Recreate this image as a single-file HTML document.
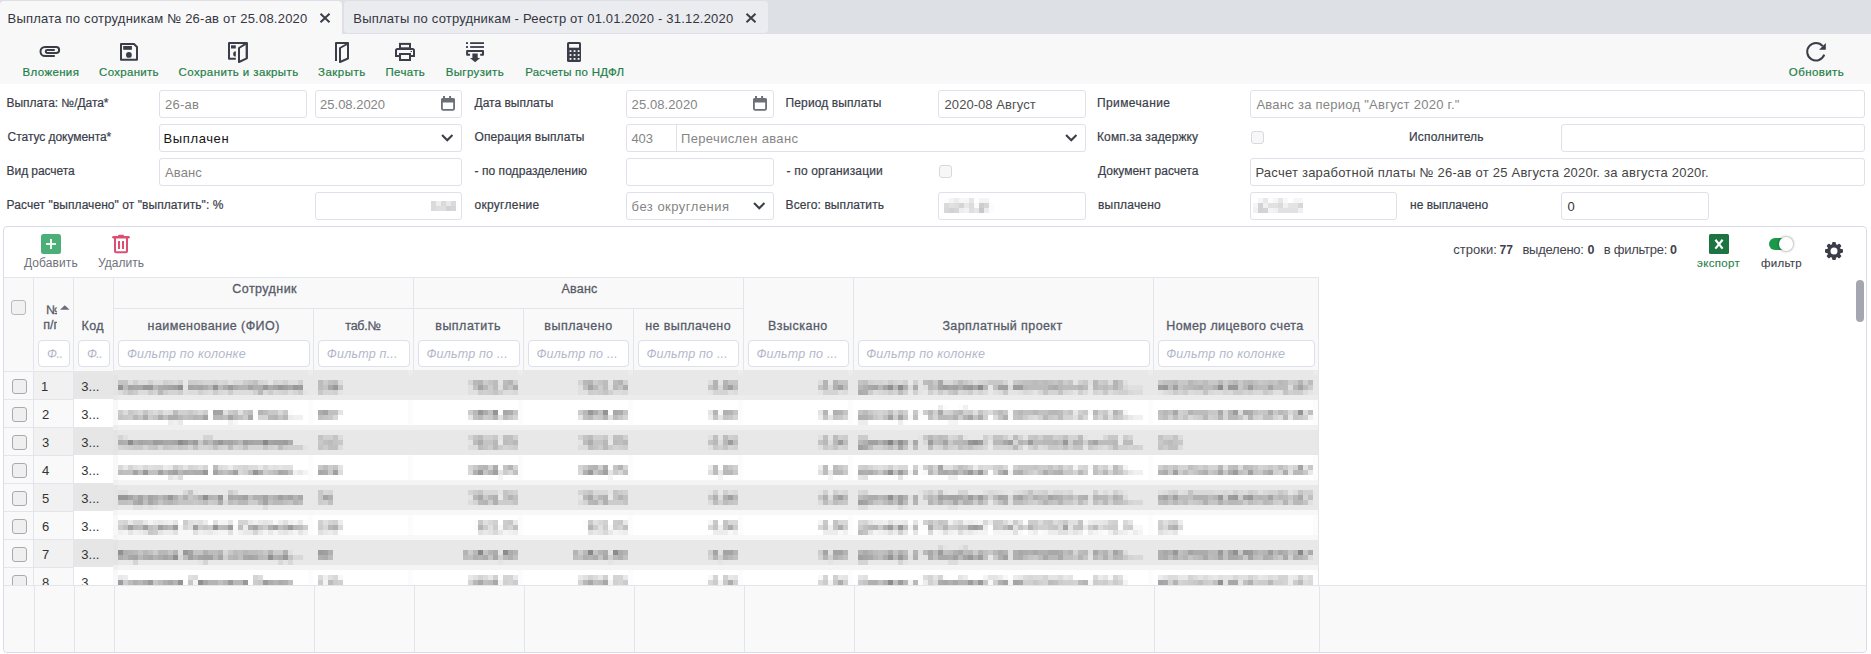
<!DOCTYPE html><html><head><meta charset="utf-8"><style>*{margin:0;padding:0;box-sizing:content-box}html,body{width:1871px;height:654px;overflow:hidden;background:#fff;position:relative;font-family:'Liberation Sans',sans-serif}
.t{position:absolute;white-space:nowrap;line-height:1;font-family:'Liberation Sans',sans-serif}</style></head><body>
<div style="position:absolute;left:0px;top:0px;width:1871px;height:34px;background:#dde0e5"></div>
<div style="position:absolute;left:0px;top:1px;width:342px;height:33px;background:#f8f8f9;border-radius:4px 4px 0 0"></div>
<div style="position:absolute;left:344px;top:1px;width:424px;height:32px;background:#ebecf0;border-radius:4px"></div>
<svg style="position:absolute;left:319px;top:12px" width="12" height="12" viewBox="319 12 12 12"><path d="M320.5 13.8 L329.5 22.2 M329.5 13.8 L320.5 22.2" stroke="#3b3e48" stroke-width="2" fill="none"/></svg>
<svg style="position:absolute;left:745px;top:12px" width="12" height="12" viewBox="745 12 12 12"><path d="M746.5 13.8 L755.5 22.2 M755.5 13.8 L746.5 22.2" stroke="#3b3e48" stroke-width="2" fill="none"/></svg>
<div style="position:absolute;left:0px;top:34px;width:1871px;height:50px;background:#f8f8f9"></div>
<svg style="position:absolute;left:36px;top:42px" width="28" height="18" viewBox="36 42 28 18"><path d="M54.8 50 H47.2 A1.45 1.45 0 0 0 47.2 52.9 H56.2 A2.95 2.95 0 0 0 56.2 47 H45 A4.5 4.5 0 0 0 45 56 H54.8" fill="none" stroke="#3b3e48" stroke-width="2"/></svg>
<svg style="position:absolute;left:116px;top:40px" width="26" height="24" viewBox="116 40 26 24"><path d="M121 44 H134 L137 47 V59.8 H121 Z" fill="none" stroke="#3b3e48" stroke-width="2" stroke-linejoin="round"/><rect x="123.2" y="46" width="8.7" height="3.8" fill="#3b3e48"/><circle cx="128.9" cy="54.9" r="2.9" fill="#3b3e48"/></svg>
<svg style="position:absolute;left:224px;top:38px" width="30" height="28" viewBox="224 38 30 28"><path d="M235.8 58.7 H229 V43 H246.8 V58.5" fill="none" stroke="#3b3e48" stroke-width="2" stroke-linejoin="round"/><path d="M239 48 L246.8 43.2 V58.3 L239 62 Z" fill="none" stroke="#3b3e48" stroke-width="2" stroke-linejoin="round"/><rect x="231" y="45.3" width="4.8" height="3.2" fill="#3b3e48"/><path d="M235.8 51.3 A2.65 2.65 0 0 0 235.8 56.6 Z" fill="#3b3e48"/></svg>
<svg style="position:absolute;left:328px;top:38px" width="28" height="28" viewBox="328 38 28 28"><path d="M336 60.9 V43 H348 V58.5" fill="none" stroke="#3b3e48" stroke-width="2" stroke-linejoin="round"/><path d="M340 48 L348 43.5 V58.5 L340 62 Z" fill="none" stroke="#3b3e48" stroke-width="2" stroke-linejoin="round"/></svg>
<svg style="position:absolute;left:390px;top:38px" width="30" height="28" viewBox="390 38 30 28"><rect x="400" y="43.9" width="10" height="4.4" fill="none" stroke="#3b3e48" stroke-width="2"/><path d="M399.5 55.9 H396 V50.5 A1.5 1.5 0 0 1 397.5 49 H412.5 A1.5 1.5 0 0 1 414 50.5 V55.9 H410.5" fill="none" stroke="#3b3e48" stroke-width="2"/><rect x="400" y="54" width="10" height="6" fill="none" stroke="#3b3e48" stroke-width="2"/><rect x="410.6" y="51" width="1.4" height="1" fill="#3b3e48"/></svg>
<svg style="position:absolute;left:462px;top:38px" width="26" height="28" viewBox="462 38 26 28"><rect x="466" y="42.2" width="2" height="1.8" fill="#3b3e48"/><rect x="466" y="46.1" width="2" height="1.8" fill="#3b3e48"/><rect x="470.1" y="42.2" width="13.9" height="1.8" fill="#3b3e48"/><rect x="470.1" y="46.1" width="13.9" height="1.8" fill="#3b3e48"/><path d="M470 54.8 H467.1 V51.1 H483 V54.8 H480.2" fill="none" stroke="#3b3e48" stroke-width="2" stroke-width="1.9" stroke-linejoin="round"/><rect x="472.4" y="53.5" width="5.3" height="5" fill="#3b3e48"/><path d="M470 58 H480.2 L475.1 62.2 Z" fill="#3b3e48"/></svg>
<svg style="position:absolute;left:564px;top:38px" width="20" height="28" viewBox="564 38 20 28"><rect x="567" y="42" width="14" height="20" rx="1.6" fill="#3b3e48"/><rect x="569.1" y="44" width="9.9" height="3.7" fill="#f8f8f9"/><rect x="569.60" y="50.20" width="1.8" height="1.8" fill="#f8f8f9"/><rect x="569.60" y="54.10" width="1.8" height="1.8" fill="#f8f8f9"/><rect x="569.60" y="58.00" width="1.8" height="1.8" fill="#f8f8f9"/><rect x="573.65" y="50.20" width="1.8" height="1.8" fill="#f8f8f9"/><rect x="573.65" y="54.10" width="1.8" height="1.8" fill="#f8f8f9"/><rect x="573.65" y="58.00" width="1.8" height="1.8" fill="#f8f8f9"/><rect x="577.70" y="50.20" width="1.8" height="1.8" fill="#f8f8f9"/><rect x="577.70" y="54.10" width="1.8" height="1.8" fill="#f8f8f9"/><rect x="577.70" y="58.00" width="1.8" height="1.8" fill="#f8f8f9"/></svg>
<svg style="position:absolute;left:1802px;top:38px" width="28" height="28" viewBox="1802 38 28 28"><path d="M1824.27 54.71 A8.8 8.8 0 1 1 1822.74 46.04" fill="none" stroke="#3b3e48" stroke-width="2" stroke-width="1.9"/><path d="M1825.8 43.1 V49.8 H1819.1 Z" fill="#3b3e48"/></svg>
<div style="position:absolute;left:159px;top:90px;width:146px;height:26px;border:1px solid #dfe0e9;border-radius:3px;background:#fff"></div>
<div style="position:absolute;left:315px;top:90px;width:145px;height:26px;border:1px solid #dfe0e9;border-radius:3px;background:#fff"></div>
<svg style="position:absolute;left:440px;top:96px" width="16" height="16" viewBox="440 96 16 16"><rect x="441.9" y="99" width="12.2" height="10.8" rx="1.3" fill="none" stroke="#6b6f7a" stroke-width="1.8"/><rect x="441" y="98.5" width="14" height="4" fill="#6b6f7a" rx="1"/><rect x="443" y="96" width="2" height="3" fill="#6b6f7a"/><rect x="449.1" y="96" width="2" height="3" fill="#6b6f7a"/></svg>
<div style="position:absolute;left:159px;top:124px;width:301px;height:26px;border:1px solid #dfe0e9;border-radius:3px;background:#fff"></div>
<svg style="position:absolute;left:441px;top:133px" width="13" height="11" viewBox="441 133 13 11"><path d="M442.8 135.8 L447.25 140.2 L451.7 135.8" fill="none" stroke="#3b3e48" stroke-width="2.1" stroke-linecap="square"/></svg>
<div style="position:absolute;left:159px;top:158px;width:301px;height:26px;border:1px solid #dfe0e9;border-radius:3px;background:#fff"></div>
<div style="position:absolute;left:315px;top:192px;width:145px;height:26px;border:1px solid #dfe0e9;border-radius:3px;background:#fff"></div>
<div style="position:absolute;left:626px;top:90px;width:146px;height:26px;border:1px solid #dfe0e9;border-radius:3px;background:#fff"></div>
<svg style="position:absolute;left:752px;top:96px" width="16" height="16" viewBox="752 96 16 16"><rect x="753.9" y="99" width="12.2" height="10.8" rx="1.3" fill="none" stroke="#6b6f7a" stroke-width="1.8"/><rect x="753" y="98.5" width="14" height="4" fill="#6b6f7a" rx="1"/><rect x="755" y="96" width="2" height="3" fill="#6b6f7a"/><rect x="761.1" y="96" width="2" height="3" fill="#6b6f7a"/></svg>
<div style="position:absolute;left:626px;top:124px;width:458px;height:26px;border:1px solid #dfe0e9;border-radius:3px;background:#fff"></div>
<div style="position:absolute;left:676px;top:125px;width:1px;height:26px;background:#dfe0e9"></div>
<svg style="position:absolute;left:1065px;top:133px" width="13" height="11" viewBox="1065 133 13 11"><path d="M1066.8 135.8 L1071.25 140.2 L1075.7 135.8" fill="none" stroke="#3b3e48" stroke-width="2.1" stroke-linecap="square"/></svg>
<div style="position:absolute;left:626px;top:158px;width:146px;height:26px;border:1px solid #dfe0e9;border-radius:3px;background:#fff"></div>
<div style="position:absolute;left:626px;top:192px;width:146px;height:26px;border:1px solid #dfe0e9;border-radius:3px;background:#fff"></div>
<svg style="position:absolute;left:753px;top:201px" width="13" height="11" viewBox="753 201 13 11"><path d="M754.8 203.8 L759.25 208.2 L763.7 203.8" fill="none" stroke="#3b3e48" stroke-width="2.1" stroke-linecap="square"/></svg>
<div style="position:absolute;left:938px;top:90px;width:146px;height:26px;border:1px solid #dfe0e9;border-radius:3px;background:#fff"></div>
<div style="position:absolute;left:939px;top:165px;width:11px;height:11px;border:1px solid #d8d9e0;border-radius:3px;background:#f7f7f8"></div>
<div style="position:absolute;left:938px;top:192px;width:146px;height:26px;border:1px solid #dfe0e9;border-radius:3px;background:#fff"></div>
<div style="position:absolute;left:1250px;top:90px;width:613px;height:26px;border:1px solid #dfe0e9;border-radius:3px;background:#fff"></div>
<div style="position:absolute;left:1251px;top:131px;width:11px;height:11px;border:1px solid #d8d9e0;border-radius:3px;background:#f7f7f8"></div>
<div style="position:absolute;left:1561px;top:124px;width:302px;height:26px;border:1px solid #dfe0e9;border-radius:3px;background:#fff"></div>
<div style="position:absolute;left:1250px;top:158px;width:613px;height:26px;border:1px solid #dfe0e9;border-radius:3px;background:#fff"></div>
<div style="position:absolute;left:1250px;top:192px;width:145px;height:26px;border:1px solid #dfe0e9;border-radius:3px;background:#fff"></div>
<div style="position:absolute;left:1561px;top:192px;width:146px;height:26px;border:1px solid #dfe0e9;border-radius:3px;background:#fff"></div>
<svg style="position:absolute;left:431px;top:201px" width="25" height="10" viewBox="431 201 25 10"><rect x="431" y="201" width="5" height="5" fill="#dadada"/><rect x="436" y="201" width="5" height="5" fill="#eeeeee"/><rect x="441" y="201" width="5" height="5" fill="#dadada"/><rect x="446" y="201" width="5" height="5" fill="#e8e8e8"/><rect x="451" y="201" width="5" height="5" fill="#dadada"/><rect x="431" y="206" width="5" height="5" fill="#dadada"/><rect x="436" y="206" width="5" height="5" fill="#dedede"/><rect x="441" y="206" width="5" height="5" fill="#dedede"/><rect x="446" y="206" width="5" height="5" fill="#d2d2d2"/><rect x="451" y="206" width="5" height="5" fill="#d6d6d6"/></svg>
<svg style="position:absolute;left:944px;top:198px" width="50" height="15" viewBox="944 198 50 15"><rect x="944" y="198" width="5" height="5" fill="#fcfcfc"/><rect x="949" y="198" width="5" height="5" fill="#f4f4f4"/><rect x="954" y="198" width="5" height="5" fill="#ececec"/><rect x="959" y="198" width="5" height="5" fill="#f6f6f6"/><rect x="964" y="198" width="5" height="5" fill="#f6f6f6"/><rect x="969" y="198" width="5" height="5" fill="#e6e6e6"/><rect x="979" y="198" width="5" height="5" fill="#f4f4f4"/><rect x="984" y="198" width="5" height="5" fill="#f4f4f4"/><rect x="944" y="203" width="5" height="5" fill="#dadada"/><rect x="949" y="203" width="5" height="5" fill="#e1e1e1"/><rect x="954" y="203" width="5" height="5" fill="#dedede"/><rect x="959" y="203" width="5" height="5" fill="#d4d4d4"/><rect x="964" y="203" width="5" height="5" fill="#e8e8e8"/><rect x="969" y="203" width="5" height="5" fill="#dcdcdc"/><rect x="974" y="203" width="5" height="5" fill="#fafafa"/><rect x="979" y="203" width="5" height="5" fill="#cdcdcd"/><rect x="984" y="203" width="5" height="5" fill="#d6d6d6"/><rect x="989" y="203" width="5" height="5" fill="#fcfcfc"/><rect x="944" y="208" width="5" height="5" fill="#d7d7d7"/><rect x="949" y="208" width="5" height="5" fill="#d2d2d2"/><rect x="954" y="208" width="5" height="5" fill="#d6d6d6"/><rect x="959" y="208" width="5" height="5" fill="#eeeeee"/><rect x="964" y="208" width="5" height="5" fill="#f2f2f2"/><rect x="969" y="208" width="5" height="5" fill="#dedede"/><rect x="974" y="208" width="5" height="5" fill="#e6e6e6"/><rect x="979" y="208" width="5" height="5" fill="#c8c8c8"/><rect x="984" y="208" width="5" height="5" fill="#ececec"/><rect x="989" y="208" width="5" height="5" fill="#fcfcfc"/></svg>
<svg style="position:absolute;left:1253px;top:198px" width="50" height="15" viewBox="1253 198 50 15"><rect x="1258" y="198" width="5" height="5" fill="#f6f6f6"/><rect x="1263" y="198" width="5" height="5" fill="#e8e8e8"/><rect x="1268" y="198" width="5" height="5" fill="#fcfcfc"/><rect x="1273" y="198" width="5" height="5" fill="#f6f6f6"/><rect x="1278" y="198" width="5" height="5" fill="#e6e6e6"/><rect x="1283" y="198" width="5" height="5" fill="#f8f8f8"/><rect x="1293" y="198" width="5" height="5" fill="#f6f6f6"/><rect x="1298" y="198" width="5" height="5" fill="#f6f6f6"/><rect x="1253" y="203" width="5" height="5" fill="#f5f5f5"/><rect x="1258" y="203" width="5" height="5" fill="#d2d2d2"/><rect x="1263" y="203" width="5" height="5" fill="#f0f0f0"/><rect x="1268" y="203" width="5" height="5" fill="#e1e1e1"/><rect x="1273" y="203" width="5" height="5" fill="#e1e1e1"/><rect x="1278" y="203" width="5" height="5" fill="#dadada"/><rect x="1283" y="203" width="5" height="5" fill="#f0f0f0"/><rect x="1288" y="203" width="5" height="5" fill="#e4e4e4"/><rect x="1293" y="203" width="5" height="5" fill="#e4e4e4"/><rect x="1298" y="203" width="5" height="5" fill="#d7d7d7"/><rect x="1253" y="208" width="5" height="5" fill="#f2f2f2"/><rect x="1258" y="208" width="5" height="5" fill="#d2d2d2"/><rect x="1263" y="208" width="5" height="5" fill="#d4d4d4"/><rect x="1268" y="208" width="5" height="5" fill="#f4f4f4"/><rect x="1273" y="208" width="5" height="5" fill="#f0f0f0"/><rect x="1278" y="208" width="5" height="5" fill="#e1e1e1"/><rect x="1283" y="208" width="5" height="5" fill="#e1e1e1"/><rect x="1288" y="208" width="5" height="5" fill="#e1e1e1"/><rect x="1293" y="208" width="5" height="5" fill="#e1e1e1"/><rect x="1298" y="208" width="5" height="5" fill="#f0f0f0"/></svg>
<div style="position:absolute;left:3px;top:226px;width:1862px;height:425px;border:1px solid #d9dce7;border-radius:4px;background:#fff"></div>
<svg style="position:absolute;left:40px;top:233px" width="22" height="22" viewBox="40 233 22 22"><rect x="41" y="234" width="20" height="20" rx="2.5" fill="#4caf78"/><path d="M46 244 H56 M51 239 V249" stroke="#eef8f1" stroke-width="2"/></svg>
<svg style="position:absolute;left:110px;top:233px" width="22" height="22" viewBox="110 233 22 22"><path d="M113.5 237.3 H128.5" stroke="#dc4f72" stroke-width="2.6" stroke-linecap="round"/><rect x="118" y="234.8" width="6" height="2" rx="1" fill="#dc4f72"/><path d="M115 238 V251.2 A1 1 0 0 0 116 252.2 H126 A1 1 0 0 0 127 251.2 V238" fill="none" stroke="#dc4f72" stroke-width="2"/><rect x="118" y="241" width="2" height="8" fill="#dc4f72"/><rect x="122" y="241" width="2" height="8" fill="#dc4f72"/></svg>
<svg style="position:absolute;left:1709px;top:234px" width="20" height="20" viewBox="1709 234 20 20"><rect x="1709" y="234" width="20" height="20" rx="1.5" fill="#1d7440"/><path d="M1715.4 239.8 L1722.6 248.6 M1722.6 239.8 L1715.4 248.6" stroke="#fff" stroke-width="2.2"/></svg>
<div style="position:absolute;left:1769px;top:238px;width:19px;height:12px;background:#1a9a48;border-radius:6px"></div>
<div style="position:absolute;left:1779.2px;top:237.2px;width:13.6px;height:13.6px;background:#fff;border-radius:50%;box-shadow:0 0 2px 1px rgba(0,0,0,0.25)"></div>
<svg style="position:absolute;left:1824px;top:241px" width="20" height="20" viewBox="1824 241 20 20"><circle cx="1834" cy="251" r="6.9" fill="#3b3e48"/><rect x="1832.1" y="242.0" width="3.8" height="5" rx="1.1" fill="#3b3e48" transform="rotate(0 1834 251)"/><rect x="1832.1" y="242.0" width="3.8" height="5" rx="1.1" fill="#3b3e48" transform="rotate(45 1834 251)"/><rect x="1832.1" y="242.0" width="3.8" height="5" rx="1.1" fill="#3b3e48" transform="rotate(90 1834 251)"/><rect x="1832.1" y="242.0" width="3.8" height="5" rx="1.1" fill="#3b3e48" transform="rotate(135 1834 251)"/><rect x="1832.1" y="242.0" width="3.8" height="5" rx="1.1" fill="#3b3e48" transform="rotate(180 1834 251)"/><rect x="1832.1" y="242.0" width="3.8" height="5" rx="1.1" fill="#3b3e48" transform="rotate(225 1834 251)"/><rect x="1832.1" y="242.0" width="3.8" height="5" rx="1.1" fill="#3b3e48" transform="rotate(270 1834 251)"/><rect x="1832.1" y="242.0" width="3.8" height="5" rx="1.1" fill="#3b3e48" transform="rotate(315 1834 251)"/><circle cx="1834" cy="251" r="3.5" fill="#fff"/></svg>
<div style="position:absolute;left:1856px;top:280px;width:8px;height:42px;background:#a5a7b0;border-radius:4px"></div>
<div style="position:absolute;left:4px;top:277px;width:1315px;height:94px;background:#f9f9fa"></div>
<div style="position:absolute;left:4px;top:277px;width:1315px;height:1px;background:#e3e4ec"></div>
<div style="position:absolute;left:33px;top:277px;width:1px;height:93px;background:#e3e4ec"></div>
<div style="position:absolute;left:73px;top:277px;width:1px;height:93px;background:#e3e4ec"></div>
<div style="position:absolute;left:113px;top:277px;width:1px;height:93px;background:#e3e4ec"></div>
<div style="position:absolute;left:413px;top:277px;width:1px;height:93px;background:#e3e4ec"></div>
<div style="position:absolute;left:743px;top:277px;width:1px;height:93px;background:#e3e4ec"></div>
<div style="position:absolute;left:853px;top:277px;width:1px;height:93px;background:#e3e4ec"></div>
<div style="position:absolute;left:1153px;top:277px;width:1px;height:93px;background:#e3e4ec"></div>
<div style="position:absolute;left:1318px;top:277px;width:1px;height:93px;background:#e3e4ec"></div>
<div style="position:absolute;left:313px;top:308px;width:1px;height:62px;background:#e3e4ec"></div>
<div style="position:absolute;left:523px;top:308px;width:1px;height:62px;background:#e3e4ec"></div>
<div style="position:absolute;left:633px;top:308px;width:1px;height:62px;background:#e3e4ec"></div>
<div style="position:absolute;left:113px;top:308px;width:630px;height:1px;background:#e3e4ec"></div>
<div style="position:absolute;left:11px;top:300px;width:13px;height:13px;border:1px solid #b9bac0;border-radius:3px;background:#f1f1f2"></div>
<svg style="position:absolute;left:58px;top:303px" width="14" height="8" viewBox="58 303 14 8"><path d="M60 309.8 L64.8 305.2 L69.6 309.8 Z" fill="#6b6f7a"/></svg>
<div style="position:absolute;left:38px;top:340px;width:30px;height:25px;border:1px solid #dddfe9;border-radius:4px;background:#fff"></div>
<div style="position:absolute;left:78px;top:340px;width:30px;height:25px;border:1px solid #dddfe9;border-radius:4px;background:#fff"></div>
<div style="position:absolute;left:118px;top:340px;width:190px;height:25px;border:1px solid #dddfe9;border-radius:4px;background:#fff"></div>
<div style="position:absolute;left:318px;top:340px;width:90px;height:25px;border:1px solid #dddfe9;border-radius:4px;background:#fff"></div>
<div style="position:absolute;left:418px;top:340px;width:99.5px;height:25px;border:1px solid #dddfe9;border-radius:4px;background:#fff"></div>
<div style="position:absolute;left:528px;top:340px;width:99px;height:25px;border:1px solid #dddfe9;border-radius:4px;background:#fff"></div>
<div style="position:absolute;left:638px;top:340px;width:99px;height:25px;border:1px solid #dddfe9;border-radius:4px;background:#fff"></div>
<div style="position:absolute;left:748px;top:340px;width:99px;height:25px;border:1px solid #dddfe9;border-radius:4px;background:#fff"></div>
<div style="position:absolute;left:858px;top:340px;width:290px;height:25px;border:1px solid #dddfe9;border-radius:4px;background:#fff"></div>
<div style="position:absolute;left:1158px;top:340px;width:155px;height:25px;border:1px solid #dddfe9;border-radius:4px;background:#fff"></div>
<div style="position:absolute;left:4px;top:371px;width:29px;height:28px;background:#f9f9f9"></div>
<div style="position:absolute;left:34px;top:371px;width:39px;height:28px;background:#f1f1f1"></div>
<div style="position:absolute;left:74px;top:371px;width:39px;height:28px;background:#e6e6e6"></div>
<div style="position:absolute;left:4px;top:371px;width:69px;height:1px;background:#e3e4ec"></div>
<div style="position:absolute;left:12px;top:379px;width:13px;height:13px;border:1px solid #a9aab0;border-radius:3px;background:#efeff0"></div>
<div style="position:absolute;left:4px;top:399px;width:29px;height:28px;background:#f9f9f9"></div>
<div style="position:absolute;left:34px;top:399px;width:39px;height:28px;background:#f9f9f9"></div>
<div style="position:absolute;left:74px;top:399px;width:39px;height:28px;background:#fff"></div>
<div style="position:absolute;left:4px;top:399px;width:69px;height:1px;background:#e3e4ec"></div>
<div style="position:absolute;left:12px;top:407px;width:13px;height:13px;border:1px solid #a9aab0;border-radius:3px;background:#efeff0"></div>
<div style="position:absolute;left:4px;top:427px;width:29px;height:28px;background:#f9f9f9"></div>
<div style="position:absolute;left:34px;top:427px;width:39px;height:28px;background:#f1f1f1"></div>
<div style="position:absolute;left:74px;top:427px;width:39px;height:28px;background:#e6e6e6"></div>
<div style="position:absolute;left:4px;top:427px;width:69px;height:1px;background:#e3e4ec"></div>
<div style="position:absolute;left:12px;top:435px;width:13px;height:13px;border:1px solid #a9aab0;border-radius:3px;background:#efeff0"></div>
<div style="position:absolute;left:4px;top:455px;width:29px;height:28px;background:#f9f9f9"></div>
<div style="position:absolute;left:34px;top:455px;width:39px;height:28px;background:#f9f9f9"></div>
<div style="position:absolute;left:74px;top:455px;width:39px;height:28px;background:#fff"></div>
<div style="position:absolute;left:4px;top:455px;width:69px;height:1px;background:#e3e4ec"></div>
<div style="position:absolute;left:12px;top:463px;width:13px;height:13px;border:1px solid #a9aab0;border-radius:3px;background:#efeff0"></div>
<div style="position:absolute;left:4px;top:483px;width:29px;height:28px;background:#f9f9f9"></div>
<div style="position:absolute;left:34px;top:483px;width:39px;height:28px;background:#f1f1f1"></div>
<div style="position:absolute;left:74px;top:483px;width:39px;height:28px;background:#e6e6e6"></div>
<div style="position:absolute;left:4px;top:483px;width:69px;height:1px;background:#e3e4ec"></div>
<div style="position:absolute;left:12px;top:491px;width:13px;height:13px;border:1px solid #a9aab0;border-radius:3px;background:#efeff0"></div>
<div style="position:absolute;left:4px;top:511px;width:29px;height:28px;background:#f9f9f9"></div>
<div style="position:absolute;left:34px;top:511px;width:39px;height:28px;background:#f9f9f9"></div>
<div style="position:absolute;left:74px;top:511px;width:39px;height:28px;background:#fff"></div>
<div style="position:absolute;left:4px;top:511px;width:69px;height:1px;background:#e3e4ec"></div>
<div style="position:absolute;left:12px;top:519px;width:13px;height:13px;border:1px solid #a9aab0;border-radius:3px;background:#efeff0"></div>
<div style="position:absolute;left:4px;top:539px;width:29px;height:28px;background:#f9f9f9"></div>
<div style="position:absolute;left:34px;top:539px;width:39px;height:28px;background:#f1f1f1"></div>
<div style="position:absolute;left:74px;top:539px;width:39px;height:28px;background:#e6e6e6"></div>
<div style="position:absolute;left:4px;top:539px;width:69px;height:1px;background:#e3e4ec"></div>
<div style="position:absolute;left:12px;top:547px;width:13px;height:13px;border:1px solid #a9aab0;border-radius:3px;background:#efeff0"></div>
<div style="position:absolute;left:4px;top:567px;width:29px;height:28px;background:#f9f9f9"></div>
<div style="position:absolute;left:34px;top:567px;width:39px;height:28px;background:#f9f9f9"></div>
<div style="position:absolute;left:74px;top:567px;width:39px;height:28px;background:#fff"></div>
<div style="position:absolute;left:4px;top:567px;width:69px;height:1px;background:#e3e4ec"></div>
<div style="position:absolute;left:12px;top:575px;width:13px;height:13px;border:1px solid #a9aab0;border-radius:3px;background:#efeff0"></div>
<div style="position:absolute;left:33px;top:371px;width:1px;height:214px;background:#e3e4ec"></div>
<div style="position:absolute;left:73px;top:371px;width:1px;height:214px;background:#e3e4ec"></div>
<svg style="position:absolute;left:113px;top:370px" width="1205" height="215" viewBox="113 370 1205 215" shape-rendering="crispEdges"><path fill="#848484" d="M888 440h5v5h-5z"/><path fill="#888888" d="M263 440h5v5h-5zM478 550h5v5h-5zM588 550h5v5h-5zM1298 550h5v5h-5z"/><path fill="#8c8c8c" d="M898 385h5v5h-5zM978 385h5v5h-5zM1218 385h5v5h-5zM128 440h5v5h-5zM178 440h5v5h-5zM503 550h5v5h-5zM613 550h5v5h-5zM888 580h5v5h-5z"/><path fill="#909090" d="M178 385h5v5h-5zM888 385h5v5h-5zM898 440h5v5h-5zM973 440h5v5h-5zM888 470h5v5h-5zM203 495h5v5h-5zM888 495h5v5h-5zM118 550h5v5h-5zM1233 550h5v5h-5zM173 555h5v5h-5zM268 555h5v5h-5zM198 580h5v5h-5zM1218 580h5v5h-5z"/><path fill="#949494" d="M118 385h5v5h-5zM213 385h5v5h-5zM493 410h5v5h-5zM603 410h5v5h-5zM1298 410h5v5h-5zM253 470h5v5h-5zM213 525h5v5h-5zM888 555h5v5h-5zM178 580h5v5h-5z"/><path fill="#989898" d="M143 385h10v5h-10zM263 385h5v5h-5zM278 385h5v5h-5zM293 385h5v5h-5zM333 385h5v5h-5zM968 385h5v5h-5zM1163 385h5v5h-5zM1228 385h10v5h-10zM478 410h5v5h-5zM588 410h5v5h-5zM183 440h5v5h-5zM218 440h5v5h-5zM968 440h5v5h-5zM1063 440h5v5h-5zM143 470h5v5h-5zM203 470h5v5h-5zM478 470h5v5h-5zM588 470h5v5h-5zM968 470h5v5h-5zM978 470h5v5h-5zM118 495h10v5h-10zM168 495h5v5h-5zM218 495h5v5h-5zM1218 495h5v5h-5zM1233 495h5v5h-5zM1248 495h5v5h-5zM898 525h5v5h-5zM183 550h5v5h-5zM1173 550h5v5h-5zM1218 550h5v5h-5zM1243 550h5v5h-5zM283 555h5v5h-5zM898 555h5v5h-5zM968 555h5v5h-5zM243 580h5v5h-5zM978 580h5v5h-5z"/><path fill="#9c9c9c" d="M228 385h5v5h-5zM298 385h5v5h-5zM943 385h5v5h-5zM963 385h5v5h-5zM1013 385h10v5h-10zM1158 385h5v5h-5zM1248 385h5v5h-5zM1233 410h5v5h-5zM153 440h5v5h-5zM193 440h5v5h-5zM243 440h5v5h-5zM283 440h5v5h-5zM728 440h5v5h-5zM838 440h5v5h-5zM928 440h5v5h-5zM978 440h5v5h-5zM1008 440h5v5h-5zM1028 440h5v5h-5zM898 470h5v5h-5zM1233 470h5v5h-5zM968 495h5v5h-5zM978 495h5v5h-5zM1228 495h5v5h-5zM173 525h5v5h-5zM228 525h5v5h-5zM288 525h5v5h-5zM888 525h5v5h-5zM973 525h5v5h-5zM318 550h5v5h-5zM938 550h5v5h-5zM1248 550h5v5h-5zM1268 550h5v5h-5zM978 555h5v5h-5zM118 580h5v5h-5zM148 580h5v5h-5zM228 580h5v5h-5zM263 580h5v5h-5zM898 580h5v5h-5zM968 580h5v5h-5z"/><path fill="#a0a0a0" d="M173 385h5v5h-5zM283 385h5v5h-5zM728 385h5v5h-5zM838 385h5v5h-5zM953 385h5v5h-5zM998 385h10v5h-10zM1173 385h5v5h-5zM888 415h5v5h-5zM158 440h5v5h-5zM273 440h10v5h-10zM868 440h10v5h-10zM883 440h5v5h-5zM858 445h5v5h-5zM158 470h5v5h-5zM173 470h5v5h-5zM233 470h5v5h-5zM333 470h5v5h-5zM493 470h5v5h-5zM603 470h5v5h-5zM1003 470h5v5h-5zM1173 470h5v5h-5zM1248 470h5v5h-5zM243 495h5v5h-5zM278 495h5v5h-5zM728 495h5v5h-5zM838 495h5v5h-5zM898 495h5v5h-5zM938 495h5v5h-5zM1173 495h5v5h-5zM1243 495h5v5h-5zM858 500h5v5h-5zM898 500h5v5h-5zM128 525h5v5h-5zM143 525h5v5h-5zM158 525h5v5h-5zM193 525h5v5h-5zM273 525h5v5h-5zM323 550h5v5h-5zM188 555h5v5h-5zM203 555h10v5h-10zM858 555h5v5h-5zM953 555h5v5h-5zM1003 555h5v5h-5z"/><path fill="#a4a4a4" d="M128 385h5v5h-5zM168 385h5v5h-5zM188 385h5v5h-5zM198 385h5v5h-5zM248 385h5v5h-5zM273 385h5v5h-5zM478 385h5v5h-5zM588 385h5v5h-5zM873 385h5v5h-5zM883 385h5v5h-5zM938 385h5v5h-5zM948 385h5v5h-5zM1268 385h5v5h-5zM1298 385h5v5h-5zM213 410h10v5h-10zM323 410h5v5h-5zM203 415h5v5h-5zM228 415h5v5h-5zM898 415h5v5h-5zM968 415h5v5h-5zM138 440h5v5h-5zM173 440h5v5h-5zM213 440h5v5h-5zM228 440h5v5h-5zM248 440h5v5h-5zM268 440h5v5h-5zM943 440h5v5h-5zM1093 440h5v5h-5zM938 465h5v5h-5zM1298 465h5v5h-5zM133 470h5v5h-5zM213 470h5v5h-5zM1218 470h5v5h-5zM128 495h5v5h-5zM138 495h5v5h-5zM148 495h5v5h-5zM263 495h5v5h-5zM288 495h5v5h-5zM323 495h5v5h-5zM948 495h10v5h-10zM998 495h5v5h-5zM1018 495h5v5h-5zM1048 495h5v5h-5zM1163 495h5v5h-5zM1268 495h5v5h-5zM138 500h5v5h-5zM263 500h5v5h-5zM863 500h5v5h-5zM253 525h5v5h-5zM968 525h5v5h-5zM1063 525h5v5h-5zM188 550h5v5h-5zM713 550h5v5h-5zM723 550h10v5h-10zM823 550h5v5h-5zM833 550h10v5h-10zM1113 550h5v5h-5zM1188 550h5v5h-5zM1228 550h5v5h-5zM133 555h5v5h-5zM163 555h5v5h-5zM198 555h5v5h-5zM218 555h5v5h-5zM248 555h5v5h-5zM863 555h5v5h-5zM963 555h5v5h-5zM1218 555h5v5h-5zM1248 555h5v5h-5zM1003 580h5v5h-5zM1013 580h5v5h-5zM1158 580h5v5h-5z"/><path fill="#a8a8a8" d="M938 380h5v5h-5zM133 385h10v5h-10zM163 385h5v5h-5zM193 385h5v5h-5zM288 385h5v5h-5zM328 385h5v5h-5zM868 385h5v5h-5zM973 385h5v5h-5zM503 410h5v5h-5zM613 410h5v5h-5zM938 410h5v5h-5zM1173 410h5v5h-5zM1218 410h5v5h-5zM1243 410h5v5h-5zM248 415h5v5h-5zM143 440h5v5h-5zM163 440h10v5h-10zM188 440h5v5h-5zM223 440h5v5h-5zM253 440h10v5h-10zM903 440h5v5h-5zM913 440h5v5h-5zM1003 440h5v5h-5zM863 445h5v5h-5zM898 445h5v5h-5zM168 470h5v5h-5zM278 470h5v5h-5zM318 470h5v5h-5zM943 470h5v5h-5zM953 470h5v5h-5zM1268 470h5v5h-5zM228 495h5v5h-5zM238 495h5v5h-5zM298 495h5v5h-5zM478 495h5v5h-5zM588 495h5v5h-5zM943 495h5v5h-5zM958 495h5v5h-5zM1003 495h5v5h-5zM1298 495h5v5h-5zM148 500h5v5h-5zM953 500h5v5h-5zM978 525h5v5h-5zM1008 525h5v5h-5zM928 550h5v5h-5zM958 550h5v5h-5zM1018 550h5v5h-5zM1033 550h5v5h-5zM1048 550h10v5h-10zM1093 550h5v5h-5zM1163 550h5v5h-5zM1278 550h5v5h-5zM128 555h5v5h-5zM148 555h5v5h-5zM243 555h5v5h-5zM253 555h5v5h-5zM493 555h5v5h-5zM603 555h5v5h-5zM868 555h5v5h-5zM938 555h10v5h-10zM1043 555h5v5h-5zM1058 555h5v5h-5zM1203 555h5v5h-5zM1228 555h10v5h-10zM1283 555h5v5h-5zM168 580h5v5h-5zM203 580h5v5h-5zM478 580h5v5h-5zM493 580h5v5h-5zM588 580h5v5h-5zM603 580h5v5h-5zM943 580h5v5h-5zM953 580h5v5h-5zM1018 580h5v5h-5zM1163 580h5v5h-5zM1228 580h10v5h-10z"/><path fill="#acacac" d="M158 385h5v5h-5zM203 385h5v5h-5zM223 385h5v5h-5zM233 385h5v5h-5zM268 385h5v5h-5zM513 385h5v5h-5zM623 385h5v5h-5zM913 385h5v5h-5zM958 385h5v5h-5zM1053 385h5v5h-5zM858 390h5v5h-5zM318 410h5v5h-5zM483 410h5v5h-5zM508 410h5v5h-5zM593 410h5v5h-5zM618 410h5v5h-5zM1248 410h5v5h-5zM1268 410h5v5h-5zM143 415h5v5h-5zM158 415h5v5h-5zM168 415h10v5h-10zM978 415h5v5h-5zM118 440h5v5h-5zM133 440h5v5h-5zM148 440h5v5h-5zM203 440h5v5h-5zM233 440h5v5h-5zM288 440h5v5h-5zM478 440h5v5h-5zM588 440h5v5h-5zM493 465h5v5h-5zM603 465h5v5h-5zM183 470h5v5h-5zM193 470h10v5h-10zM258 470h5v5h-5zM283 470h5v5h-5zM323 470h5v5h-5zM858 470h5v5h-5zM868 470h5v5h-5zM938 470h5v5h-5zM963 470h5v5h-5zM1043 470h5v5h-5zM1163 470h5v5h-5zM1228 470h5v5h-5zM1283 470h5v5h-5zM153 495h5v5h-5zM163 495h5v5h-5zM233 495h5v5h-5zM283 495h5v5h-5zM868 495h10v5h-10zM1013 495h5v5h-5zM1053 495h5v5h-5zM1158 495h5v5h-5zM133 500h5v5h-5zM218 500h5v5h-5zM728 525h5v5h-5zM838 525h5v5h-5zM928 525h5v5h-5zM493 550h5v5h-5zM508 550h5v5h-5zM603 550h5v5h-5zM618 550h5v5h-5zM863 550h5v5h-5zM888 550h5v5h-5zM998 550h5v5h-5zM1023 550h5v5h-5zM1058 550h5v5h-5zM1193 550h15v5h-15zM1308 550h5v5h-5zM118 555h5v5h-5zM143 555h5v5h-5zM158 555h5v5h-5zM168 555h5v5h-5zM278 555h5v5h-5zM323 555h5v5h-5zM483 555h5v5h-5zM593 555h5v5h-5zM883 555h5v5h-5zM928 555h5v5h-5zM948 555h5v5h-5zM1018 555h5v5h-5zM1163 555h5v5h-5zM1173 555h5v5h-5zM1263 555h5v5h-5zM143 580h5v5h-5zM268 580h5v5h-5zM278 580h5v5h-5zM728 580h5v5h-5zM838 580h5v5h-5zM938 580h5v5h-5z"/><path fill="#b0b0b0" d="M253 385h10v5h-10zM723 385h5v5h-5zM833 385h5v5h-5zM863 385h5v5h-5zM903 385h5v5h-5zM1048 385h5v5h-5zM1198 385h5v5h-5zM1213 385h5v5h-5zM863 390h5v5h-5zM723 410h5v5h-5zM833 410h5v5h-5zM858 415h10v5h-10zM953 415h5v5h-5zM1003 415h5v5h-5zM123 440h5v5h-5zM863 440h5v5h-5zM878 440h5v5h-5zM893 440h5v5h-5zM1073 440h5v5h-5zM1088 440h5v5h-5zM188 470h5v5h-5zM473 470h5v5h-5zM583 470h5v5h-5zM863 470h5v5h-5zM883 470h5v5h-5zM948 470h5v5h-5zM1018 470h5v5h-5zM1058 470h5v5h-5zM1203 470h5v5h-5zM173 495h5v5h-5zM183 495h5v5h-5zM198 495h5v5h-5zM253 495h10v5h-10zM273 495h5v5h-5zM328 495h5v5h-5zM493 495h5v5h-5zM603 495h5v5h-5zM713 495h5v5h-5zM723 495h5v5h-5zM823 495h5v5h-5zM833 495h5v5h-5zM883 495h5v5h-5zM903 495h5v5h-5zM913 495h5v5h-5zM1033 495h5v5h-5zM1058 495h5v5h-5zM1083 495h5v5h-5zM1113 495h5v5h-5zM1193 495h15v5h-15zM493 500h5v5h-5zM603 500h5v5h-5zM888 500h5v5h-5zM938 500h5v5h-5zM963 500h5v5h-5zM1003 500h5v5h-5zM1203 500h5v5h-5zM1218 500h5v5h-5zM163 525h5v5h-5zM248 525h5v5h-5zM268 525h5v5h-5zM333 525h5v5h-5zM883 525h5v5h-5zM1173 525h5v5h-5zM123 550h5v5h-5zM203 550h5v5h-5zM283 550h5v5h-5zM328 550h5v5h-5zM898 550h5v5h-5zM953 550h5v5h-5zM1013 550h5v5h-5zM1028 550h5v5h-5zM1038 550h10v5h-10zM1158 550h5v5h-5zM1168 550h5v5h-5zM1253 550h5v5h-5zM1283 550h5v5h-5zM193 555h5v5h-5zM273 555h5v5h-5zM318 555h5v5h-5zM473 555h5v5h-5zM508 555h5v5h-5zM583 555h5v5h-5zM618 555h5v5h-5zM723 555h5v5h-5zM833 555h5v5h-5zM903 555h5v5h-5zM913 555h5v5h-5zM973 555h5v5h-5zM998 555h5v5h-5zM1013 555h5v5h-5zM1103 555h5v5h-5zM1158 555h5v5h-5zM1238 555h5v5h-5zM1268 555h5v5h-5zM1293 555h5v5h-5zM133 580h5v5h-5zM163 580h5v5h-5zM283 580h5v5h-5zM868 580h10v5h-10zM883 580h5v5h-5zM948 580h5v5h-5zM998 580h5v5h-5zM1248 580h5v5h-5z"/><path fill="#b4b4b4" d="M478 380h5v5h-5zM508 380h5v5h-5zM588 380h5v5h-5zM618 380h5v5h-5zM713 380h5v5h-5zM723 380h5v5h-5zM823 380h5v5h-5zM833 380h5v5h-5zM1113 380h5v5h-5zM1298 380h5v5h-5zM238 385h10v5h-10zM713 385h5v5h-5zM823 385h5v5h-5zM1078 385h5v5h-5zM1113 385h5v5h-5zM1193 385h5v5h-5zM258 410h5v5h-5zM713 410h5v5h-5zM728 410h5v5h-5zM823 410h5v5h-5zM838 410h5v5h-5zM1113 410h5v5h-5zM1188 410h5v5h-5zM1228 410h5v5h-5zM193 415h5v5h-5zM273 415h5v5h-5zM493 415h5v5h-5zM603 415h5v5h-5zM963 415h5v5h-5zM1218 415h5v5h-5zM1248 415h5v5h-5zM963 440h5v5h-5zM1018 440h5v5h-5zM1053 440h5v5h-5zM1078 440h5v5h-5zM483 465h5v5h-5zM508 465h5v5h-5zM593 465h5v5h-5zM618 465h5v5h-5zM228 470h5v5h-5zM488 470h5v5h-5zM598 470h5v5h-5zM998 470h5v5h-5zM1013 470h5v5h-5zM1053 470h5v5h-5zM1158 470h5v5h-5zM1263 470h5v5h-5zM133 495h5v5h-5zM208 495h5v5h-5zM293 495h5v5h-5zM508 495h5v5h-5zM618 495h5v5h-5zM863 495h5v5h-5zM963 495h5v5h-5zM973 495h5v5h-5zM1078 495h5v5h-5zM1093 495h5v5h-5zM1213 495h5v5h-5zM1258 495h5v5h-5zM153 500h5v5h-5zM168 500h5v5h-5zM293 500h5v5h-5zM483 500h5v5h-5zM593 500h5v5h-5zM868 500h5v5h-5zM913 500h5v5h-5zM928 500h5v5h-5zM968 500h5v5h-5zM978 500h5v5h-5zM1043 500h5v5h-5zM1058 500h5v5h-5zM1283 500h5v5h-5zM283 525h5v5h-5zM478 525h5v5h-5zM588 525h5v5h-5zM873 525h5v5h-5zM943 525h5v5h-5zM1028 525h5v5h-5zM128 550h5v5h-5zM173 550h5v5h-5zM218 550h5v5h-5zM268 550h5v5h-5zM463 550h5v5h-5zM488 550h5v5h-5zM513 550h5v5h-5zM573 550h5v5h-5zM598 550h5v5h-5zM623 550h5v5h-5zM733 550h5v5h-5zM843 550h5v5h-5zM858 550h5v5h-5zM868 550h5v5h-5zM913 550h5v5h-5zM978 550h5v5h-5zM1003 550h5v5h-5zM1068 550h5v5h-5zM1103 550h5v5h-5zM1118 550h5v5h-5zM1263 550h5v5h-5zM123 555h5v5h-5zM153 555h5v5h-5zM233 555h5v5h-5zM478 555h5v5h-5zM588 555h5v5h-5zM713 555h5v5h-5zM823 555h5v5h-5zM873 555h5v5h-5zM1078 555h5v5h-5zM1113 555h5v5h-5zM1183 555h5v5h-5zM1298 555h5v5h-5zM173 580h5v5h-5zM208 580h10v5h-10zM223 580h5v5h-5zM273 580h5v5h-5zM958 580h10v5h-10zM1083 580h5v5h-5zM1173 580h5v5h-5z"/><path fill="#b8b8b8" d="M473 380h5v5h-5zM583 380h5v5h-5zM928 380h5v5h-5zM1093 380h5v5h-5zM1188 380h5v5h-5zM1218 380h5v5h-5zM1233 380h5v5h-5zM1248 380h5v5h-5zM1278 380h5v5h-5zM153 385h5v5h-5zM208 385h5v5h-5zM483 385h5v5h-5zM503 385h5v5h-5zM593 385h5v5h-5zM613 385h5v5h-5zM858 385h5v5h-5zM878 385h5v5h-5zM893 385h5v5h-5zM928 385h5v5h-5zM983 385h5v5h-5zM1023 385h5v5h-5zM1058 385h5v5h-5zM1093 385h5v5h-5zM1188 385h5v5h-5zM1243 385h5v5h-5zM1253 385h5v5h-5zM1293 385h5v5h-5zM158 390h5v5h-5zM258 390h5v5h-5zM473 410h5v5h-5zM583 410h5v5h-5zM928 410h5v5h-5zM958 410h5v5h-5zM1018 410h5v5h-5zM1033 410h5v5h-5zM1048 410h10v5h-10zM1093 410h5v5h-5zM1163 410h5v5h-5zM1278 410h5v5h-5zM133 415h5v5h-5zM178 415h5v5h-5zM198 415h5v5h-5zM213 415h10v5h-10zM233 415h5v5h-5zM268 415h5v5h-5zM283 415h5v5h-5zM478 415h5v5h-5zM588 415h5v5h-5zM868 415h5v5h-5zM938 415h10v5h-10zM1043 415h5v5h-5zM1203 415h5v5h-5zM1228 415h10v5h-10zM1283 415h5v5h-5zM928 435h5v5h-5zM208 440h5v5h-5zM238 440h5v5h-5zM493 440h5v5h-5zM513 440h5v5h-5zM603 440h5v5h-5zM623 440h5v5h-5zM713 440h5v5h-5zM723 440h5v5h-5zM823 440h5v5h-5zM833 440h5v5h-5zM858 440h5v5h-5zM938 440h5v5h-5zM953 440h10v5h-10zM993 440h10v5h-10zM1043 440h10v5h-10zM1113 440h5v5h-5zM493 445h5v5h-5zM603 445h5v5h-5zM1013 445h5v5h-5zM478 465h5v5h-5zM588 465h5v5h-5zM1218 465h5v5h-5zM163 470h5v5h-5zM178 470h5v5h-5zM218 470h5v5h-5zM723 470h10v5h-10zM833 470h10v5h-10zM873 470h5v5h-5zM903 470h5v5h-5zM913 470h5v5h-5zM928 470h5v5h-5zM973 470h5v5h-5zM1078 470h5v5h-5zM1103 470h5v5h-5zM1198 470h5v5h-5zM1293 470h10v5h-10zM143 495h5v5h-5zM158 495h5v5h-5zM213 495h5v5h-5zM268 495h5v5h-5zM473 495h5v5h-5zM488 495h5v5h-5zM583 495h5v5h-5zM598 495h5v5h-5zM733 495h5v5h-5zM843 495h5v5h-5zM878 495h5v5h-5zM893 495h5v5h-5zM928 495h5v5h-5zM983 495h5v5h-5zM993 495h5v5h-5zM1023 495h5v5h-5zM1038 495h5v5h-5zM1068 495h5v5h-5zM1098 495h10v5h-10zM1118 495h5v5h-5zM1168 495h5v5h-5zM1253 495h5v5h-5zM1263 495h5v5h-5zM1278 495h5v5h-5zM1293 495h5v5h-5zM163 500h5v5h-5zM238 500h10v5h-10zM258 500h5v5h-5zM273 500h10v5h-10zM478 500h5v5h-5zM588 500h5v5h-5zM1103 500h5v5h-5zM1163 500h5v5h-5zM1173 500h5v5h-5zM1228 500h10v5h-10zM1263 500h5v5h-5zM1293 500h10v5h-10zM133 525h5v5h-5zM168 525h5v5h-5zM223 525h5v5h-5zM293 525h5v5h-5zM328 525h5v5h-5zM868 525h5v5h-5zM1168 525h5v5h-5zM133 550h5v5h-5zM143 550h5v5h-5zM158 550h10v5h-10zM243 550h5v5h-5zM473 550h5v5h-5zM583 550h5v5h-5zM923 550h5v5h-5zM968 550h5v5h-5zM993 550h5v5h-5zM1083 550h5v5h-5zM1183 550h5v5h-5zM1208 550h10v5h-10zM1258 550h5v5h-5zM1273 550h5v5h-5zM1293 550h5v5h-5zM138 555h5v5h-5zM213 555h5v5h-5zM228 555h5v5h-5zM258 555h5v5h-5zM503 555h5v5h-5zM613 555h5v5h-5zM728 555h5v5h-5zM838 555h5v5h-5zM893 555h5v5h-5zM958 555h5v5h-5zM1048 555h10v5h-10zM1093 555h5v5h-5zM1118 555h5v5h-5zM1198 555h5v5h-5zM1213 555h5v5h-5zM138 580h5v5h-5zM233 580h10v5h-10zM473 580h5v5h-5zM583 580h5v5h-5zM903 580h5v5h-5zM913 580h5v5h-5zM973 580h5v5h-5zM1268 580h5v5h-5z"/><path fill="#bcbcbc" d="M318 380h5v5h-5zM333 380h5v5h-5zM493 380h5v5h-5zM503 380h5v5h-5zM603 380h5v5h-5zM613 380h5v5h-5zM923 380h5v5h-5zM958 380h5v5h-5zM1033 380h5v5h-5zM1043 380h5v5h-5zM1058 380h5v5h-5zM1173 380h5v5h-5zM1203 380h5v5h-5zM1243 380h5v5h-5zM1283 380h5v5h-5zM1308 380h5v5h-5zM123 385h5v5h-5zM218 385h5v5h-5zM318 385h5v5h-5zM493 385h5v5h-5zM603 385h5v5h-5zM733 385h5v5h-5zM843 385h5v5h-5zM1028 385h20v5h-20zM1063 385h15v5h-15zM1083 385h5v5h-5zM1103 385h5v5h-5zM1168 385h5v5h-5zM1183 385h5v5h-5zM1203 385h10v5h-10zM1258 385h10v5h-10zM1273 385h15v5h-15zM1303 385h5v5h-5zM898 390h5v5h-5zM173 410h5v5h-5zM263 410h5v5h-5zM863 410h5v5h-5zM998 410h5v5h-5zM1058 410h5v5h-5zM1193 410h15v5h-15zM188 415h5v5h-5zM503 415h5v5h-5zM613 415h5v5h-5zM948 415h5v5h-5zM1058 415h5v5h-5zM1163 415h5v5h-5zM1173 415h5v5h-5zM478 435h5v5h-5zM588 435h5v5h-5zM723 435h5v5h-5zM833 435h5v5h-5zM938 435h5v5h-5zM1013 435h5v5h-5zM1078 435h5v5h-5zM328 440h5v5h-5zM473 440h5v5h-5zM503 440h5v5h-5zM583 440h5v5h-5zM613 440h5v5h-5zM733 440h5v5h-5zM843 440h5v5h-5zM933 440h5v5h-5zM1023 440h5v5h-5zM1033 440h10v5h-10zM1058 440h5v5h-5zM1098 440h15v5h-15zM1123 440h10v5h-10zM1168 440h5v5h-5zM228 445h5v5h-5zM278 445h5v5h-5zM478 445h5v5h-5zM588 445h5v5h-5zM868 445h5v5h-5zM888 445h5v5h-5zM913 445h5v5h-5zM928 445h5v5h-5zM1113 445h5v5h-5zM213 465h5v5h-5zM323 465h5v5h-5zM713 465h5v5h-5zM723 465h5v5h-5zM823 465h5v5h-5zM833 465h5v5h-5zM1113 465h5v5h-5zM1233 465h5v5h-5zM1243 465h5v5h-5zM118 470h5v5h-5zM138 470h5v5h-5zM248 470h5v5h-5zM273 470h5v5h-5zM713 470h5v5h-5zM823 470h5v5h-5zM958 470h5v5h-5zM1048 470h5v5h-5zM1113 470h5v5h-5zM1183 470h5v5h-5zM858 495h5v5h-5zM1043 495h5v5h-5zM1063 495h5v5h-5zM1178 495h10v5h-10zM1208 495h5v5h-5zM1283 495h5v5h-5zM173 500h5v5h-5zM203 500h5v5h-5zM228 500h5v5h-5zM298 500h5v5h-5zM713 500h5v5h-5zM723 500h5v5h-5zM823 500h5v5h-5zM833 500h5v5h-5zM883 500h5v5h-5zM903 500h5v5h-5zM1013 500h10v5h-10zM1078 500h5v5h-5zM1113 500h5v5h-5zM1158 500h5v5h-5zM1183 500h5v5h-5zM1238 500h5v5h-5zM1248 500h5v5h-5zM1268 500h5v5h-5zM138 525h5v5h-5zM218 525h5v5h-5zM298 525h5v5h-5zM913 525h5v5h-5zM1003 525h5v5h-5zM1093 525h5v5h-5zM858 530h5v5h-5zM208 550h10v5h-10zM233 550h5v5h-5zM248 550h10v5h-10zM873 550h5v5h-5zM883 550h5v5h-5zM903 550h5v5h-5zM933 550h5v5h-5zM948 550h5v5h-5zM963 550h5v5h-5zM1063 550h5v5h-5zM1078 550h5v5h-5zM1098 550h5v5h-5zM183 555h5v5h-5zM263 555h5v5h-5zM328 555h5v5h-5zM463 555h5v5h-5zM573 555h5v5h-5zM878 555h5v5h-5zM1023 555h5v5h-5zM1038 555h5v5h-5zM1168 555h5v5h-5zM1178 555h5v5h-5zM1193 555h5v5h-5zM1208 555h5v5h-5zM1253 555h5v5h-5zM1303 555h5v5h-5zM128 580h5v5h-5zM158 580h5v5h-5zM328 580h5v5h-5zM488 580h5v5h-5zM598 580h5v5h-5zM1048 580h5v5h-5zM1078 580h5v5h-5zM1298 580h5v5h-5z"/><path fill="#c0c0c0" d="M253 380h5v5h-5zM328 380h5v5h-5zM863 380h5v5h-5zM1023 380h10v5h-10zM1038 380h5v5h-5zM1048 380h5v5h-5zM1163 380h10v5h-10zM1193 380h5v5h-5zM1228 380h5v5h-5zM1253 380h5v5h-5zM1268 380h5v5h-5zM473 385h5v5h-5zM583 385h5v5h-5zM933 385h5v5h-5zM993 385h5v5h-5zM1098 385h5v5h-5zM953 390h5v5h-5zM248 410h5v5h-5zM328 410h10v5h-10zM488 410h5v5h-5zM598 410h5v5h-5zM888 410h5v5h-5zM953 410h5v5h-5zM1013 410h5v5h-5zM1023 410h10v5h-10zM1038 410h10v5h-10zM1158 410h5v5h-5zM1168 410h5v5h-5zM1253 410h5v5h-5zM1283 410h5v5h-5zM1308 410h5v5h-5zM163 415h5v5h-5zM183 415h5v5h-5zM223 415h5v5h-5zM238 415h5v5h-5zM318 415h5v5h-5zM473 415h5v5h-5zM583 415h5v5h-5zM883 415h5v5h-5zM913 415h5v5h-5zM928 415h5v5h-5zM1018 415h5v5h-5zM1103 415h5v5h-5zM1263 415h10v5h-10zM503 435h10v5h-10zM613 435h10v5h-10zM713 435h5v5h-5zM823 435h5v5h-5zM943 435h5v5h-5zM1043 435h10v5h-10zM1063 435h5v5h-5zM323 440h5v5h-5zM508 440h5v5h-5zM618 440h5v5h-5zM1163 440h5v5h-5zM193 445h5v5h-5zM213 445h5v5h-5zM243 445h5v5h-5zM328 445h10v5h-10zM943 445h5v5h-5zM958 445h5v5h-5zM968 445h5v5h-5zM1063 445h5v5h-5zM1168 445h10v5h-10zM928 465h5v5h-5zM958 465h5v5h-5zM1188 465h5v5h-5zM1228 465h5v5h-5zM1248 465h5v5h-5zM1278 465h5v5h-5zM123 470h10v5h-10zM148 470h10v5h-10zM223 470h5v5h-5zM288 470h5v5h-5zM513 470h5v5h-5zM623 470h5v5h-5zM893 470h5v5h-5zM1093 470h5v5h-5zM1213 470h5v5h-5zM1238 470h5v5h-5zM193 495h5v5h-5zM248 495h5v5h-5zM513 495h5v5h-5zM623 495h5v5h-5zM933 495h5v5h-5zM1188 495h5v5h-5zM1273 495h5v5h-5zM1308 495h5v5h-5zM118 500h10v5h-10zM143 500h5v5h-5zM268 500h5v5h-5zM283 500h5v5h-5zM328 500h5v5h-5zM893 500h5v5h-5zM948 500h5v5h-5zM998 500h5v5h-5zM1048 500h5v5h-5zM1093 500h5v5h-5zM1118 500h5v5h-5zM1223 500h5v5h-5zM123 525h5v5h-5zM148 525h5v5h-5zM238 525h5v5h-5zM258 525h5v5h-5zM278 525h5v5h-5zM513 525h5v5h-5zM623 525h5v5h-5zM863 525h5v5h-5zM903 525h5v5h-5zM958 525h5v5h-5zM1078 525h5v5h-5zM148 550h5v5h-5zM238 550h5v5h-5zM258 550h5v5h-5zM878 550h5v5h-5zM943 550h5v5h-5zM983 550h5v5h-5zM1178 550h5v5h-5zM1223 550h5v5h-5zM238 555h5v5h-5zM468 555h5v5h-5zM513 555h5v5h-5zM578 555h5v5h-5zM623 555h5v5h-5zM733 555h5v5h-5zM843 555h5v5h-5zM933 555h5v5h-5zM983 555h5v5h-5zM1063 555h10v5h-10zM1223 555h5v5h-5zM1258 555h5v5h-5zM1273 555h5v5h-5zM218 580h5v5h-5zM288 580h5v5h-5zM483 580h5v5h-5zM593 580h5v5h-5zM878 580h5v5h-5zM893 580h5v5h-5zM1053 580h5v5h-5zM1198 580h5v5h-5zM1213 580h5v5h-5zM1243 580h5v5h-5z"/><path fill="#c4c4c4" d="M118 380h10v5h-10zM488 380h5v5h-5zM598 380h5v5h-5zM728 380h10v5h-10zM838 380h10v5h-10zM858 380h5v5h-5zM1018 380h5v5h-5zM1053 380h5v5h-5zM1068 380h5v5h-5zM1118 380h5v5h-5zM1198 380h5v5h-5zM1263 380h5v5h-5zM1273 380h5v5h-5zM323 385h5v5h-5zM338 385h5v5h-5zM508 385h5v5h-5zM618 385h5v5h-5zM708 385h5v5h-5zM818 385h5v5h-5zM1108 385h5v5h-5zM1118 385h5v5h-5zM1178 385h5v5h-5zM128 390h5v5h-5zM493 390h5v5h-5zM603 390h5v5h-5zM1043 390h5v5h-5zM1058 390h5v5h-5zM1203 390h5v5h-5zM1283 390h5v5h-5zM143 410h5v5h-5zM233 410h5v5h-5zM513 410h5v5h-5zM623 410h5v5h-5zM733 410h5v5h-5zM843 410h5v5h-5zM858 410h5v5h-5zM898 410h5v5h-5zM978 410h5v5h-5zM1068 410h5v5h-5zM1118 410h5v5h-5zM1263 410h5v5h-5zM118 415h5v5h-5zM138 415h5v5h-5zM153 415h5v5h-5zM278 415h5v5h-5zM323 415h5v5h-5zM713 415h5v5h-5zM723 415h5v5h-5zM823 415h5v5h-5zM833 415h5v5h-5zM903 415h5v5h-5zM973 415h5v5h-5zM998 415h5v5h-5zM1013 415h5v5h-5zM1078 415h5v5h-5zM1113 415h5v5h-5zM1158 415h5v5h-5zM1183 415h5v5h-5zM1238 415h5v5h-5zM1293 415h5v5h-5zM318 435h5v5h-5zM333 435h5v5h-5zM473 435h5v5h-5zM583 435h5v5h-5zM933 435h5v5h-5zM958 435h5v5h-5zM993 435h10v5h-10zM1033 435h5v5h-5zM1158 435h5v5h-5zM1173 435h5v5h-5zM333 440h5v5h-5zM483 440h10v5h-10zM593 440h10v5h-10zM708 440h5v5h-5zM818 440h5v5h-5zM1173 440h5v5h-5zM153 445h5v5h-5zM163 445h5v5h-5zM178 445h5v5h-5zM263 445h5v5h-5zM318 445h5v5h-5zM483 445h5v5h-5zM593 445h5v5h-5zM723 445h5v5h-5zM833 445h5v5h-5zM903 445h5v5h-5zM1073 445h10v5h-10zM1158 445h5v5h-5zM333 465h5v5h-5zM503 465h5v5h-5zM613 465h5v5h-5zM1033 465h5v5h-5zM1048 465h5v5h-5zM1058 465h5v5h-5zM1093 465h5v5h-5zM1163 465h5v5h-5zM1173 465h5v5h-5zM268 470h5v5h-5zM483 470h5v5h-5zM593 470h5v5h-5zM1023 470h5v5h-5zM1038 470h5v5h-5zM1118 470h5v5h-5zM1193 470h5v5h-5zM1253 470h5v5h-5zM188 490h5v5h-5zM478 490h5v5h-5zM503 490h5v5h-5zM588 490h5v5h-5zM613 490h5v5h-5zM938 490h5v5h-5zM1028 490h5v5h-5zM1188 490h5v5h-5zM1298 490h5v5h-5zM178 495h5v5h-5zM503 495h5v5h-5zM613 495h5v5h-5zM1028 495h5v5h-5zM128 500h5v5h-5zM158 500h5v5h-5zM178 500h15v5h-15zM198 500h5v5h-5zM233 500h5v5h-5zM288 500h5v5h-5zM513 500h5v5h-5zM623 500h5v5h-5zM728 500h5v5h-5zM838 500h5v5h-5zM873 500h5v5h-5zM933 500h5v5h-5zM943 500h5v5h-5zM958 500h5v5h-5zM1023 500h5v5h-5zM1038 500h5v5h-5zM1053 500h5v5h-5zM1168 500h5v5h-5zM1178 500h5v5h-5zM1198 500h5v5h-5zM1208 500h10v5h-10zM1253 500h5v5h-5zM1303 500h5v5h-5zM723 520h5v5h-5zM833 520h5v5h-5zM928 520h5v5h-5zM938 520h5v5h-5zM1078 520h5v5h-5zM203 525h5v5h-5zM713 525h5v5h-5zM723 525h5v5h-5zM823 525h5v5h-5zM833 525h5v5h-5zM963 525h5v5h-5zM1018 525h5v5h-5zM1053 525h5v5h-5zM1073 525h5v5h-5zM863 530h5v5h-5zM138 550h5v5h-5zM168 550h5v5h-5zM193 550h10v5h-10zM483 550h5v5h-5zM593 550h5v5h-5zM893 550h5v5h-5zM1288 550h5v5h-5zM288 555h5v5h-5zM488 555h5v5h-5zM598 555h5v5h-5zM1028 555h5v5h-5zM1083 555h5v5h-5zM1098 555h5v5h-5zM1188 555h5v5h-5zM863 580h5v5h-5z"/><path fill="#c8c8c8" d="M248 380h5v5h-5zM933 380h5v5h-5zM963 380h5v5h-5zM988 380h15v5h-15zM1013 380h5v5h-5zM1083 380h5v5h-5zM1103 380h5v5h-5zM1158 380h5v5h-5zM1178 380h10v5h-10zM1208 380h10v5h-10zM1238 380h5v5h-5zM1258 380h5v5h-5zM1293 380h5v5h-5zM1223 385h5v5h-5zM1238 385h5v5h-5zM318 390h5v5h-5zM948 390h5v5h-5zM1003 390h5v5h-5zM1103 390h5v5h-5zM1263 390h5v5h-5zM128 410h5v5h-5zM188 410h5v5h-5zM243 410h5v5h-5zM268 410h10v5h-10zM283 410h5v5h-5zM868 410h5v5h-5zM913 410h5v5h-5zM993 410h5v5h-5zM1003 410h5v5h-5zM1083 410h5v5h-5zM1103 410h5v5h-5zM1208 410h10v5h-10zM1258 410h5v5h-5zM1273 410h5v5h-5zM1293 410h5v5h-5zM123 415h5v5h-5zM328 415h5v5h-5zM488 415h5v5h-5zM508 415h5v5h-5zM598 415h5v5h-5zM618 415h5v5h-5zM728 415h5v5h-5zM838 415h5v5h-5zM873 415h5v5h-5zM1048 415h5v5h-5zM1093 415h5v5h-5zM1298 415h5v5h-5zM493 435h5v5h-5zM603 435h5v5h-5zM923 435h5v5h-5zM1028 435h5v5h-5zM1108 435h10v5h-10zM198 440h5v5h-5zM318 440h5v5h-5zM338 440h5v5h-5zM948 440h5v5h-5zM1158 440h5v5h-5zM1178 440h5v5h-5zM133 445h10v5h-10zM148 445h5v5h-5zM168 445h5v5h-5zM183 445h5v5h-5zM713 445h5v5h-5zM823 445h5v5h-5zM883 445h5v5h-5zM963 445h5v5h-5zM1033 445h5v5h-5zM1048 445h10v5h-10zM1088 445h5v5h-5zM318 465h5v5h-5zM473 465h5v5h-5zM583 465h5v5h-5zM728 465h5v5h-5zM838 465h5v5h-5zM963 465h5v5h-5zM1018 465h15v5h-15zM1193 465h5v5h-5zM1203 465h5v5h-5zM1253 465h5v5h-5zM1268 465h5v5h-5zM1308 465h5v5h-5zM328 470h5v5h-5zM733 470h5v5h-5zM843 470h5v5h-5zM878 470h5v5h-5zM983 470h5v5h-5zM1063 470h10v5h-10zM1168 470h5v5h-5zM1208 470h5v5h-5zM1223 470h5v5h-5zM1243 470h5v5h-5zM1258 470h5v5h-5zM1303 470h5v5h-5zM318 490h5v5h-5zM1278 490h5v5h-5zM188 495h5v5h-5zM318 495h5v5h-5zM483 495h5v5h-5zM593 495h5v5h-5zM708 495h5v5h-5zM818 495h5v5h-5zM923 495h5v5h-5zM1073 495h5v5h-5zM1108 495h5v5h-5zM1288 495h5v5h-5zM193 500h5v5h-5zM213 500h5v5h-5zM733 500h5v5h-5zM843 500h5v5h-5zM878 500h5v5h-5zM983 500h5v5h-5zM1063 500h10v5h-10zM1123 500h5v5h-5zM1193 500h5v5h-5zM1258 500h5v5h-5zM478 520h5v5h-5zM508 520h5v5h-5zM588 520h5v5h-5zM618 520h5v5h-5zM713 520h5v5h-5zM823 520h5v5h-5zM943 520h5v5h-5zM1048 520h5v5h-5zM1063 520h5v5h-5zM153 525h5v5h-5zM893 525h5v5h-5zM993 525h5v5h-5zM1033 525h5v5h-5zM1048 525h5v5h-5zM148 530h5v5h-5zM228 550h5v5h-5zM263 550h5v5h-5zM988 550h5v5h-5zM1238 550h5v5h-5zM1303 550h5v5h-5zM993 555h5v5h-5zM1033 555h5v5h-5zM1073 555h5v5h-5zM1108 555h5v5h-5zM1123 555h5v5h-5zM1243 555h5v5h-5zM1278 555h5v5h-5zM153 580h5v5h-5zM188 580h5v5h-5zM258 580h5v5h-5zM723 580h5v5h-5zM833 580h5v5h-5zM983 580h5v5h-5zM1033 580h5v5h-5zM1193 580h5v5h-5z"/><path fill="#cccccc" d="M188 380h10v5h-10zM243 380h5v5h-5zM323 380h5v5h-5zM483 380h5v5h-5zM593 380h5v5h-5zM888 380h5v5h-5zM953 380h5v5h-5zM1063 380h5v5h-5zM1098 380h5v5h-5zM1223 380h5v5h-5zM1288 380h5v5h-5zM488 385h5v5h-5zM598 385h5v5h-5zM1308 385h5v5h-5zM133 390h5v5h-5zM148 390h5v5h-5zM163 390h5v5h-5zM178 390h5v5h-5zM213 390h5v5h-5zM228 390h5v5h-5zM268 390h5v5h-5zM298 390h5v5h-5zM478 390h5v5h-5zM488 390h5v5h-5zM588 390h5v5h-5zM598 390h5v5h-5zM868 390h5v5h-5zM888 390h5v5h-5zM938 390h5v5h-5zM968 390h5v5h-5zM1173 390h5v5h-5zM1183 390h5v5h-5zM1233 390h10v5h-10zM1293 390h10v5h-10zM118 410h5v5h-5zM203 410h5v5h-5zM228 410h5v5h-5zM468 410h5v5h-5zM578 410h5v5h-5zM923 410h5v5h-5zM968 410h5v5h-5zM1063 410h5v5h-5zM1183 410h5v5h-5zM128 415h5v5h-5zM148 415h5v5h-5zM243 415h5v5h-5zM483 415h5v5h-5zM593 415h5v5h-5zM893 415h5v5h-5zM958 415h5v5h-5zM1023 415h5v5h-5zM1053 415h5v5h-5zM1118 415h5v5h-5zM1198 415h5v5h-5zM1213 415h5v5h-5zM733 435h5v5h-5zM843 435h5v5h-5zM858 435h10v5h-10zM1058 435h5v5h-5zM1123 435h5v5h-5zM983 440h5v5h-5zM1068 440h5v5h-5zM128 445h5v5h-5zM173 445h5v5h-5zM283 445h5v5h-5zM323 445h5v5h-5zM488 445h5v5h-5zM498 445h5v5h-5zM513 445h5v5h-5zM598 445h5v5h-5zM608 445h5v5h-5zM623 445h5v5h-5zM893 445h5v5h-5zM973 445h5v5h-5zM1058 445h5v5h-5zM1163 445h5v5h-5zM173 465h5v5h-5zM328 465h5v5h-5zM863 465h5v5h-5zM998 465h5v5h-5zM1038 465h10v5h-10zM1168 465h5v5h-5zM1283 465h5v5h-5zM263 470h5v5h-5zM503 470h5v5h-5zM613 470h5v5h-5zM1028 470h5v5h-5zM1083 470h5v5h-5zM1098 470h5v5h-5zM1178 470h5v5h-5zM1188 470h5v5h-5zM228 490h5v5h-5zM473 490h5v5h-5zM508 490h5v5h-5zM583 490h5v5h-5zM618 490h5v5h-5zM1223 495h5v5h-5zM1238 495h5v5h-5zM208 500h5v5h-5zM248 500h10v5h-10zM318 500h5v5h-5zM488 500h5v5h-5zM498 500h15v5h-15zM598 500h5v5h-5zM608 500h15v5h-15zM973 500h5v5h-5zM1028 500h5v5h-5zM1083 500h5v5h-5zM1098 500h5v5h-5zM1188 500h5v5h-5zM1243 500h5v5h-5zM1273 500h5v5h-5zM183 520h5v5h-5zM503 520h5v5h-5zM613 520h5v5h-5zM993 520h10v5h-10zM1013 520h5v5h-5zM1028 520h10v5h-10zM1043 520h5v5h-5zM118 525h5v5h-5zM198 525h5v5h-5zM208 525h5v5h-5zM263 525h5v5h-5zM303 525h5v5h-5zM318 525h5v5h-5zM483 525h5v5h-5zM493 525h5v5h-5zM503 525h5v5h-5zM593 525h5v5h-5zM603 525h5v5h-5zM613 525h5v5h-5zM733 525h5v5h-5zM843 525h5v5h-5zM858 525h5v5h-5zM878 525h5v5h-5zM938 525h5v5h-5zM953 525h5v5h-5zM998 525h5v5h-5zM1088 525h5v5h-5zM1108 525h10v5h-10zM1128 525h5v5h-5zM1158 525h5v5h-5zM153 530h5v5h-5zM153 550h5v5h-5zM273 550h10v5h-10zM468 550h5v5h-5zM578 550h5v5h-5zM708 550h5v5h-5zM818 550h5v5h-5zM973 550h5v5h-5zM1108 550h5v5h-5zM123 580h5v5h-5zM253 580h5v5h-5zM318 580h5v5h-5zM333 580h5v5h-5zM513 580h5v5h-5zM623 580h5v5h-5zM713 580h5v5h-5zM823 580h5v5h-5zM858 580h5v5h-5zM1058 580h5v5h-5zM1093 580h5v5h-5zM1103 580h5v5h-5zM1113 580h5v5h-5zM1188 580h5v5h-5zM1203 580h5v5h-5zM1258 580h10v5h-10zM1293 580h5v5h-5z"/><path fill="#d0d0d0" d="M133 380h5v5h-5zM148 380h5v5h-5zM163 380h5v5h-5zM178 380h5v5h-5zM198 380h5v5h-5zM213 380h5v5h-5zM283 380h5v5h-5zM298 380h5v5h-5zM513 380h5v5h-5zM623 380h5v5h-5zM868 380h5v5h-5zM903 380h5v5h-5zM913 380h5v5h-5zM968 380h5v5h-5zM983 380h5v5h-5zM1078 380h5v5h-5zM1303 380h5v5h-5zM123 390h5v5h-5zM198 390h5v5h-5zM253 390h5v5h-5zM283 390h5v5h-5zM333 390h5v5h-5zM483 390h5v5h-5zM498 390h5v5h-5zM593 390h5v5h-5zM608 390h5v5h-5zM903 390h5v5h-5zM913 390h5v5h-5zM928 390h5v5h-5zM1078 390h5v5h-5zM1118 390h10v5h-10zM1248 390h5v5h-5zM1268 390h5v5h-5zM1288 390h5v5h-5zM133 410h5v5h-5zM158 410h5v5h-5zM178 410h10v5h-10zM193 410h5v5h-5zM873 410h5v5h-5zM883 410h5v5h-5zM903 410h5v5h-5zM933 410h5v5h-5zM948 410h5v5h-5zM963 410h5v5h-5zM1078 410h5v5h-5zM1098 410h5v5h-5zM1178 410h5v5h-5zM878 415h5v5h-5zM983 415h5v5h-5zM1038 415h5v5h-5zM1168 415h5v5h-5zM1178 415h5v5h-5zM1193 415h5v5h-5zM1208 415h5v5h-5zM1253 415h5v5h-5zM1303 415h5v5h-5zM323 435h10v5h-10zM483 435h10v5h-10zM513 435h5v5h-5zM593 435h10v5h-10zM623 435h5v5h-5zM728 435h5v5h-5zM838 435h5v5h-5zM983 435h5v5h-5zM1003 435h5v5h-5zM1038 435h5v5h-5zM1053 435h5v5h-5zM1163 435h10v5h-10zM1083 440h5v5h-5zM123 445h5v5h-5zM208 445h5v5h-5zM218 445h5v5h-5zM238 445h5v5h-5zM268 445h5v5h-5zM288 445h15v5h-15zM508 445h5v5h-5zM618 445h5v5h-5zM718 445h5v5h-5zM733 445h5v5h-5zM828 445h5v5h-5zM843 445h5v5h-5zM873 445h10v5h-10zM948 445h5v5h-5zM978 445h5v5h-5zM1008 445h5v5h-5zM1068 445h5v5h-5zM1093 445h5v5h-5zM1108 445h5v5h-5zM1118 445h10v5h-10zM1133 445h5v5h-5zM488 465h5v5h-5zM598 465h5v5h-5zM733 465h5v5h-5zM843 465h5v5h-5zM858 465h5v5h-5zM888 465h5v5h-5zM913 465h5v5h-5zM923 465h5v5h-5zM953 465h5v5h-5zM993 465h5v5h-5zM1013 465h5v5h-5zM1053 465h5v5h-5zM1068 465h5v5h-5zM1103 465h5v5h-5zM1118 465h5v5h-5zM1158 465h5v5h-5zM1198 465h5v5h-5zM1263 465h5v5h-5zM1273 465h5v5h-5zM243 470h5v5h-5zM933 470h5v5h-5zM1273 470h5v5h-5zM513 490h5v5h-5zM623 490h5v5h-5zM713 490h5v5h-5zM723 490h5v5h-5zM823 490h5v5h-5zM833 490h5v5h-5zM928 490h5v5h-5zM1043 490h5v5h-5zM1093 490h5v5h-5zM1113 490h5v5h-5zM1173 490h5v5h-5zM1233 490h5v5h-5zM1248 490h5v5h-5zM1283 490h5v5h-5zM1303 490h10v5h-10zM323 500h5v5h-5zM718 500h5v5h-5zM828 500h5v5h-5zM993 500h5v5h-5zM1033 500h5v5h-5zM1108 500h5v5h-5zM1278 500h5v5h-5zM1288 500h5v5h-5zM318 520h5v5h-5zM333 520h5v5h-5zM493 520h5v5h-5zM603 520h5v5h-5zM923 520h5v5h-5zM933 520h5v5h-5zM1113 520h5v5h-5zM1158 520h5v5h-5zM1173 520h5v5h-5zM933 525h5v5h-5zM948 525h5v5h-5zM1038 525h10v5h-10zM1103 525h5v5h-5zM1123 525h5v5h-5zM898 530h5v5h-5zM223 555h5v5h-5zM498 555h5v5h-5zM608 555h5v5h-5zM718 555h5v5h-5zM828 555h5v5h-5zM1288 555h5v5h-5zM493 575h5v5h-5zM603 575h5v5h-5zM723 575h5v5h-5zM833 575h5v5h-5zM1298 575h5v5h-5zM338 580h5v5h-5zM503 580h5v5h-5zM613 580h5v5h-5zM733 580h5v5h-5zM843 580h5v5h-5zM928 580h5v5h-5zM993 580h5v5h-5zM1023 580h10v5h-10zM1038 580h5v5h-5zM1063 580h10v5h-10zM1098 580h5v5h-5zM1168 580h5v5h-5zM1183 580h5v5h-5zM1208 580h5v5h-5zM1253 580h5v5h-5zM1273 580h10v5h-10z"/><path fill="#d4d4d4" d="M168 380h5v5h-5zM203 380h10v5h-10zM223 380h5v5h-5zM258 380h5v5h-5zM273 380h5v5h-5zM468 380h5v5h-5zM578 380h5v5h-5zM873 380h10v5h-10zM893 380h5v5h-5zM978 380h5v5h-5zM1003 380h5v5h-5zM153 390h5v5h-5zM168 390h10v5h-10zM278 390h5v5h-5zM293 390h5v5h-5zM323 390h10v5h-10zM713 390h15v5h-15zM823 390h15v5h-15zM883 390h5v5h-5zM893 390h5v5h-5zM963 390h5v5h-5zM978 390h5v5h-5zM1048 390h10v5h-10zM1093 390h5v5h-5zM1113 390h5v5h-5zM1178 390h5v5h-5zM1223 390h5v5h-5zM1243 390h5v5h-5zM148 410h5v5h-5zM878 410h5v5h-5zM943 410h5v5h-5zM983 410h5v5h-5zM1223 410h5v5h-5zM258 415h10v5h-10zM513 415h5v5h-5zM623 415h5v5h-5zM733 415h5v5h-5zM843 415h5v5h-5zM933 415h5v5h-5zM1063 415h10v5h-10zM1223 415h5v5h-5zM1258 415h5v5h-5zM1273 415h5v5h-5zM118 435h5v5h-5zM203 435h10v5h-10zM468 435h5v5h-5zM578 435h5v5h-5zM953 435h5v5h-5zM1018 435h5v5h-5zM1068 435h10v5h-10zM1128 435h5v5h-5zM1013 440h5v5h-5zM118 445h5v5h-5zM143 445h5v5h-5zM158 445h5v5h-5zM188 445h5v5h-5zM198 445h10v5h-10zM223 445h5v5h-5zM233 445h5v5h-5zM248 445h15v5h-15zM273 445h5v5h-5zM503 445h5v5h-5zM613 445h5v5h-5zM728 445h5v5h-5zM838 445h5v5h-5zM938 445h5v5h-5zM953 445h5v5h-5zM993 445h15v5h-15zM1018 445h5v5h-5zM1028 445h5v5h-5zM1128 445h5v5h-5zM1138 445h5v5h-5zM128 465h5v5h-5zM188 465h5v5h-5zM203 465h5v5h-5zM243 465h5v5h-5zM468 465h5v5h-5zM513 465h5v5h-5zM578 465h5v5h-5zM623 465h5v5h-5zM868 465h5v5h-5zM933 465h5v5h-5zM968 465h5v5h-5zM1083 465h5v5h-5zM1178 465h10v5h-10zM1208 465h10v5h-10zM1258 465h5v5h-5zM1293 465h5v5h-5zM993 470h5v5h-5zM1033 470h5v5h-5zM1073 470h5v5h-5zM1108 470h5v5h-5zM1278 470h5v5h-5zM328 490h5v5h-5zM468 490h5v5h-5zM578 490h5v5h-5zM863 490h5v5h-5zM958 490h10v5h-10zM1023 490h5v5h-5zM1038 490h5v5h-5zM1168 490h5v5h-5zM1253 490h5v5h-5zM1268 490h10v5h-10zM988 495h5v5h-5zM1303 495h5v5h-5zM473 500h5v5h-5zM583 500h5v5h-5zM1073 500h5v5h-5zM1128 500h5v5h-5zM123 520h5v5h-5zM238 520h10v5h-10zM328 520h5v5h-5zM863 520h5v5h-5zM1058 520h5v5h-5zM1108 520h5v5h-5zM1168 520h5v5h-5zM183 525h5v5h-5zM508 525h5v5h-5zM618 525h5v5h-5zM1023 525h5v5h-5zM253 530h5v5h-5zM1073 550h5v5h-5zM708 555h5v5h-5zM818 555h5v5h-5zM1128 555h5v5h-5zM133 560h5v5h-5zM203 560h5v5h-5zM858 560h10v5h-10zM898 560h5v5h-5zM253 575h5v5h-5zM478 575h5v5h-5zM503 575h10v5h-10zM588 575h5v5h-5zM613 575h10v5h-10zM713 575h5v5h-5zM823 575h5v5h-5zM928 575h5v5h-5zM938 575h5v5h-5zM1043 575h5v5h-5zM1113 575h5v5h-5zM1188 575h5v5h-5zM1248 575h5v5h-5zM1278 575h10v5h-10zM468 580h5v5h-5zM508 580h5v5h-5zM578 580h5v5h-5zM618 580h5v5h-5zM1043 580h5v5h-5zM1073 580h5v5h-5zM1118 580h5v5h-5zM1178 580h5v5h-5zM1283 580h5v5h-5z"/><path fill="#d8d8d8" d="M173 380h5v5h-5zM218 380h5v5h-5zM233 380h10v5h-10zM263 380h5v5h-5zM278 380h5v5h-5zM883 380h5v5h-5zM898 380h5v5h-5zM943 380h10v5h-10zM718 385h5v5h-5zM828 385h5v5h-5zM1123 385h5v5h-5zM203 390h5v5h-5zM218 390h5v5h-5zM263 390h5v5h-5zM273 390h5v5h-5zM513 390h5v5h-5zM623 390h5v5h-5zM878 390h5v5h-5zM943 390h5v5h-5zM958 390h5v5h-5zM1023 390h5v5h-5zM1038 390h5v5h-5zM1063 390h5v5h-5zM1098 390h5v5h-5zM1128 390h5v5h-5zM1168 390h5v5h-5zM1193 390h10v5h-10zM1208 390h5v5h-5zM1228 390h5v5h-5zM1253 390h10v5h-10zM138 410h5v5h-5zM198 410h5v5h-5zM278 410h5v5h-5zM893 410h5v5h-5zM1288 410h5v5h-5zM333 415h5v5h-5zM1028 415h5v5h-5zM1083 415h5v5h-5zM1098 415h5v5h-5zM1188 415h5v5h-5zM948 435h5v5h-5zM1103 435h5v5h-5zM923 440h5v5h-5zM933 445h5v5h-5zM983 445h5v5h-5zM1043 445h5v5h-5zM1098 445h5v5h-5zM118 465h5v5h-5zM143 465h5v5h-5zM178 465h5v5h-5zM193 465h5v5h-5zM238 465h5v5h-5zM263 465h5v5h-5zM898 465h10v5h-10zM978 465h5v5h-5zM1003 465h5v5h-5zM1063 465h5v5h-5zM1078 465h5v5h-5zM1098 465h5v5h-5zM238 470h5v5h-5zM468 470h5v5h-5zM508 470h5v5h-5zM578 470h5v5h-5zM618 470h5v5h-5zM1123 470h5v5h-5zM183 490h5v5h-5zM233 490h5v5h-5zM323 490h5v5h-5zM483 490h15v5h-15zM593 490h15v5h-15zM733 490h5v5h-5zM843 490h5v5h-5zM858 490h5v5h-5zM923 490h5v5h-5zM988 490h5v5h-5zM1033 490h5v5h-5zM1053 490h10v5h-10zM1068 490h5v5h-5zM1193 490h20v5h-20zM1223 490h5v5h-5zM1238 490h5v5h-5zM1263 490h5v5h-5zM223 500h5v5h-5zM1133 500h10v5h-10zM118 520h5v5h-5zM133 520h10v5h-10zM488 520h5v5h-5zM598 520h5v5h-5zM728 520h10v5h-10zM838 520h10v5h-10zM858 520h5v5h-5zM958 520h5v5h-5zM983 520h5v5h-5zM1123 520h5v5h-5zM323 525h5v5h-5zM338 525h5v5h-5zM708 525h5v5h-5zM818 525h5v5h-5zM1058 525h5v5h-5zM1163 525h5v5h-5zM1178 525h5v5h-5zM493 530h5v5h-5zM603 530h5v5h-5zM928 530h5v5h-5zM938 545h5v5h-5zM963 545h5v5h-5zM223 550h5v5h-5zM178 555h5v5h-5zM293 555h10v5h-10zM1133 555h10v5h-10zM278 560h5v5h-5zM288 560h5v5h-5zM333 575h5v5h-5zM1028 575h5v5h-5zM1093 575h5v5h-5zM1233 575h5v5h-5zM708 580h5v5h-5zM818 580h5v5h-5zM1108 580h5v5h-5zM1308 580h5v5h-5z"/><path fill="#dcdcdc" d="M128 380h5v5h-5zM138 380h10v5h-10zM153 380h10v5h-10zM288 380h10v5h-10zM338 380h5v5h-5zM708 380h5v5h-5zM818 380h5v5h-5zM973 380h5v5h-5zM1108 380h5v5h-5zM908 385h5v5h-5zM1008 385h5v5h-5zM1288 385h5v5h-5zM118 390h5v5h-5zM138 390h10v5h-10zM188 390h10v5h-10zM208 390h5v5h-5zM223 390h5v5h-5zM233 390h20v5h-20zM288 390h5v5h-5zM503 390h10v5h-10zM613 390h10v5h-10zM733 390h5v5h-5zM843 390h5v5h-5zM873 390h5v5h-5zM933 390h5v5h-5zM973 390h5v5h-5zM983 390h5v5h-5zM998 390h5v5h-5zM1028 390h5v5h-5zM1068 390h5v5h-5zM1083 390h5v5h-5zM1108 390h5v5h-5zM1133 390h10v5h-10zM1163 390h5v5h-5zM1188 390h5v5h-5zM1213 390h10v5h-10zM1303 390h5v5h-5zM123 410h5v5h-5zM153 410h5v5h-5zM168 410h5v5h-5zM988 410h5v5h-5zM1238 410h5v5h-5zM1303 410h5v5h-5zM993 415h5v5h-5zM1033 415h5v5h-5zM1108 415h5v5h-5zM1123 415h5v5h-5zM1243 415h5v5h-5zM1278 415h5v5h-5zM338 435h5v5h-5zM988 435h5v5h-5zM1178 435h5v5h-5zM718 440h5v5h-5zM828 440h5v5h-5zM908 440h5v5h-5zM338 445h5v5h-5zM468 445h10v5h-10zM578 445h10v5h-10zM1038 445h5v5h-5zM1103 445h5v5h-5zM1178 445h5v5h-5zM153 465h10v5h-10zM218 465h5v5h-5zM233 465h5v5h-5zM248 465h10v5h-10zM873 465h5v5h-5zM883 465h5v5h-5zM983 465h10v5h-10zM1238 465h5v5h-5zM1288 465h5v5h-5zM338 470h5v5h-5zM178 475h5v5h-5zM728 490h5v5h-5zM838 490h5v5h-5zM933 490h5v5h-5zM993 490h5v5h-5zM1018 490h5v5h-5zM1063 490h5v5h-5zM1103 490h5v5h-5zM1118 490h5v5h-5zM1163 490h5v5h-5zM1183 490h5v5h-5zM1213 490h10v5h-10zM1228 490h5v5h-5zM1243 490h5v5h-5zM1293 490h5v5h-5zM718 495h5v5h-5zM828 495h5v5h-5zM1008 495h5v5h-5zM1123 495h5v5h-5zM468 500h5v5h-5zM578 500h5v5h-5zM708 500h5v5h-5zM818 500h5v5h-5zM263 505h5v5h-5zM858 505h10v5h-10zM898 505h5v5h-5zM1003 520h5v5h-5zM1038 520h5v5h-5zM1053 520h5v5h-5zM1098 525h5v5h-5zM958 530h5v5h-5zM1113 530h5v5h-5zM1123 550h5v5h-5zM1308 555h5v5h-5zM948 560h10v5h-10zM193 575h5v5h-5zM258 575h5v5h-5zM318 575h5v5h-5zM483 575h5v5h-5zM593 575h5v5h-5zM923 575h5v5h-5zM1023 575h5v5h-5zM1033 575h10v5h-10zM1058 575h5v5h-5zM1168 575h10v5h-10zM1193 575h5v5h-5zM1203 575h5v5h-5zM1253 575h5v5h-5zM1268 575h5v5h-5zM1308 575h5v5h-5zM933 580h5v5h-5zM1303 580h5v5h-5z"/><path fill="#e0e0e0" d="M228 380h5v5h-5zM1088 380h5v5h-5zM1123 380h5v5h-5zM468 385h5v5h-5zM498 385h5v5h-5zM578 385h5v5h-5zM608 385h5v5h-5zM923 385h5v5h-5zM1128 385h15v5h-15zM183 390h5v5h-5zM468 390h10v5h-10zM578 390h10v5h-10zM728 390h5v5h-5zM838 390h5v5h-5zM993 390h5v5h-5zM1018 390h5v5h-5zM1273 390h10v5h-10zM163 410h5v5h-5zM223 410h5v5h-5zM238 410h5v5h-5zM973 410h5v5h-5zM498 415h5v5h-5zM608 415h5v5h-5zM1073 415h5v5h-5zM123 435h5v5h-5zM708 435h5v5h-5zM818 435h5v5h-5zM1008 435h5v5h-5zM708 445h5v5h-5zM818 445h5v5h-5zM133 465h5v5h-5zM148 465h5v5h-5zM198 465h5v5h-5zM223 465h5v5h-5zM273 465h5v5h-5zM283 465h10v5h-10zM878 465h5v5h-5zM893 465h5v5h-5zM943 465h10v5h-10zM1223 465h5v5h-5zM708 470h5v5h-5zM818 470h5v5h-5zM1288 470h5v5h-5zM863 475h5v5h-5zM118 490h10v5h-10zM983 490h5v5h-5zM998 490h5v5h-5zM1013 490h5v5h-5zM1048 490h5v5h-5zM1158 490h5v5h-5zM1178 490h5v5h-5zM1258 490h5v5h-5zM223 495h5v5h-5zM908 495h5v5h-5zM1088 495h5v5h-5zM1008 500h5v5h-5zM1308 500h5v5h-5zM133 505h10v5h-10zM148 505h5v5h-5zM948 505h10v5h-10zM188 520h5v5h-5zM198 520h5v5h-5zM213 520h5v5h-5zM283 520h5v5h-5zM323 520h5v5h-5zM483 520h5v5h-5zM593 520h5v5h-5zM888 520h5v5h-5zM953 520h5v5h-5zM1018 520h5v5h-5zM1068 520h10v5h-10zM1163 520h5v5h-5zM188 525h5v5h-5zM488 525h5v5h-5zM598 525h5v5h-5zM1013 525h5v5h-5zM173 530h5v5h-5zM193 530h5v5h-5zM228 530h5v5h-5zM318 530h5v5h-5zM478 530h5v5h-5zM588 530h5v5h-5zM888 530h5v5h-5zM943 530h5v5h-5zM1013 530h5v5h-5zM1058 530h10v5h-10zM1158 530h5v5h-5zM178 550h5v5h-5zM288 550h5v5h-5zM718 550h5v5h-5zM828 550h5v5h-5zM918 550h5v5h-5zM1008 550h5v5h-5zM1088 550h5v5h-5zM908 555h5v5h-5zM1008 555h5v5h-5zM188 575h5v5h-5zM328 575h5v5h-5zM473 575h5v5h-5zM583 575h5v5h-5zM863 575h5v5h-5zM1118 575h5v5h-5zM1218 575h5v5h-5zM1238 575h10v5h-10zM1273 575h5v5h-5z"/><path fill="#e4e4e4" d="M113 375h5v5h-5zM113 380h5v5h-5zM268 380h5v5h-5zM498 380h5v5h-5zM608 380h5v5h-5zM718 380h5v5h-5zM828 380h5v5h-5zM918 380h5v5h-5zM1008 380h5v5h-5zM1073 380h5v5h-5zM113 385h5v5h-5zM183 385h5v5h-5zM918 385h5v5h-5zM1088 385h5v5h-5zM113 390h5v5h-5zM303 390h5v5h-5zM338 390h5v5h-5zM708 390h5v5h-5zM818 390h5v5h-5zM918 390h5v5h-5zM1008 390h10v5h-10zM1033 390h5v5h-5zM1073 390h5v5h-5zM1158 390h5v5h-5zM1308 390h5v5h-5zM338 410h5v5h-5zM708 410h5v5h-5zM818 410h5v5h-5zM1108 410h5v5h-5zM468 415h5v5h-5zM578 415h5v5h-5zM718 415h5v5h-5zM828 415h5v5h-5zM1288 415h5v5h-5zM113 430h5v5h-5zM113 435h5v5h-5zM498 435h5v5h-5zM608 435h5v5h-5zM718 435h5v5h-5zM828 435h5v5h-5zM918 435h5v5h-5zM963 435h5v5h-5zM1023 435h5v5h-5zM1083 435h5v5h-5zM113 440h5v5h-5zM468 440h5v5h-5zM578 440h5v5h-5zM918 440h5v5h-5zM988 440h5v5h-5zM113 445h5v5h-5zM303 445h5v5h-5zM908 445h5v5h-5zM918 445h10v5h-10zM1083 445h5v5h-5zM113 450h5v5h-5zM138 465h5v5h-5zM183 465h5v5h-5zM268 465h5v5h-5zM278 465h5v5h-5zM338 465h5v5h-5zM1303 465h5v5h-5zM498 470h5v5h-5zM608 470h5v5h-5zM168 475h5v5h-5zM858 475h5v5h-5zM898 475h5v5h-5zM113 485h5v5h-5zM113 490h5v5h-5zM193 490h5v5h-5zM498 490h5v5h-5zM608 490h5v5h-5zM708 490h5v5h-5zM818 490h5v5h-5zM918 490h5v5h-5zM943 490h5v5h-5zM1003 490h5v5h-5zM1098 490h5v5h-5zM1108 490h5v5h-5zM1123 490h5v5h-5zM1288 490h5v5h-5zM113 495h5v5h-5zM468 495h5v5h-5zM578 495h5v5h-5zM918 495h5v5h-5zM113 500h5v5h-5zM908 500h5v5h-5zM918 500h10v5h-10zM1088 500h5v5h-5zM113 505h5v5h-5zM143 505h5v5h-5zM153 505h5v5h-5zM903 505h5v5h-5zM173 520h5v5h-5zM193 520h5v5h-5zM228 520h5v5h-5zM263 520h5v5h-5zM868 520h5v5h-5zM913 520h5v5h-5zM1103 520h5v5h-5zM1128 520h5v5h-5zM1068 525h5v5h-5zM128 530h5v5h-5zM143 530h5v5h-5zM158 530h5v5h-5zM283 530h5v5h-5zM298 530h5v5h-5zM333 530h5v5h-5zM488 530h5v5h-5zM598 530h5v5h-5zM868 530h5v5h-5zM913 530h5v5h-5zM1073 530h5v5h-5zM1173 530h5v5h-5zM113 540h5v5h-5zM113 545h5v5h-5zM943 545h5v5h-5zM958 545h5v5h-5zM113 550h5v5h-5zM498 550h5v5h-5zM608 550h5v5h-5zM908 550h5v5h-5zM113 555h5v5h-5zM918 555h10v5h-10zM1088 555h5v5h-5zM113 560h5v5h-5zM198 560h5v5h-5zM283 560h5v5h-5zM498 560h5v5h-5zM608 560h5v5h-5zM718 560h5v5h-5zM828 560h5v5h-5zM903 560h5v5h-5zM733 575h5v5h-5zM843 575h5v5h-5zM858 575h5v5h-5zM933 575h5v5h-5zM958 575h5v5h-5zM988 575h10v5h-10zM1048 575h10v5h-10zM1068 575h5v5h-5zM1103 575h5v5h-5zM1163 575h5v5h-5zM1198 575h5v5h-5zM1208 575h5v5h-5zM1223 575h10v5h-10zM1263 575h5v5h-5zM1303 575h5v5h-5zM1223 580h5v5h-5zM1238 580h5v5h-5z"/><path fill="#e8e8e8" d="M113 370h195v5h-195zM313 370h95v5h-95zM413 370h105v5h-105zM523 370h105v5h-105zM633 370h105v5h-105zM743 370h105v5h-105zM853 370h295v5h-295zM1153 370h160v5h-160zM118 375h1200v5h-1200zM183 380h5v5h-5zM303 380h15v5h-15zM343 380h125v5h-125zM518 380h60v5h-60zM628 380h80v5h-80zM738 380h80v5h-80zM848 380h10v5h-10zM908 380h5v5h-5zM1128 380h30v5h-30zM1313 380h5v5h-5zM303 385h15v5h-15zM343 385h125v5h-125zM518 385h60v5h-60zM628 385h80v5h-80zM738 385h80v5h-80zM848 385h10v5h-10zM988 385h5v5h-5zM1143 385h15v5h-15zM1313 385h5v5h-5zM308 390h10v5h-10zM343 390h125v5h-125zM518 390h60v5h-60zM628 390h80v5h-80zM738 390h80v5h-80zM848 390h10v5h-10zM908 390h5v5h-5zM923 390h5v5h-5zM988 390h5v5h-5zM1088 390h5v5h-5zM1143 390h15v5h-15zM1313 390h5v5h-5zM113 395h5v5h-5zM1073 410h5v5h-5zM1128 415h5v5h-5zM178 420h5v5h-5zM118 430h1200v5h-1200zM128 435h75v5h-75zM213 435h105v5h-105zM343 435h125v5h-125zM518 435h60v5h-60zM628 435h80v5h-80zM738 435h80v5h-80zM848 435h10v5h-10zM868 435h50v5h-50zM968 435h15v5h-15zM1088 435h15v5h-15zM1118 435h5v5h-5zM1133 435h25v5h-25zM1183 435h135v5h-135zM293 440h25v5h-25zM343 440h125v5h-125zM498 440h5v5h-5zM518 440h60v5h-60zM608 440h5v5h-5zM628 440h80v5h-80zM738 440h80v5h-80zM848 440h10v5h-10zM1118 440h5v5h-5zM1133 440h25v5h-25zM1183 440h135v5h-135zM308 445h10v5h-10zM343 445h125v5h-125zM518 445h60v5h-60zM628 445h80v5h-80zM738 445h80v5h-80zM848 445h10v5h-10zM988 445h5v5h-5zM1023 445h5v5h-5zM1143 445h15v5h-15zM1183 445h135v5h-135zM118 450h1200v5h-1200zM123 465h5v5h-5zM168 465h5v5h-5zM258 465h5v5h-5zM298 470h5v5h-5zM718 470h5v5h-5zM828 470h5v5h-5zM1128 470h5v5h-5zM1308 470h5v5h-5zM118 485h1200v5h-1200zM128 490h55v5h-55zM198 490h30v5h-30zM238 490h80v5h-80zM333 490h135v5h-135zM518 490h60v5h-60zM628 490h80v5h-80zM718 490h5v5h-5zM738 490h80v5h-80zM828 490h5v5h-5zM848 490h10v5h-10zM868 490h50v5h-50zM948 490h10v5h-10zM968 490h15v5h-15zM1008 490h5v5h-5zM1073 490h20v5h-20zM1128 490h30v5h-30zM1313 490h5v5h-5zM303 495h15v5h-15zM333 495h135v5h-135zM498 495h5v5h-5zM518 495h60v5h-60zM608 495h5v5h-5zM628 495h80v5h-80zM738 495h80v5h-80zM848 495h10v5h-10zM1128 495h30v5h-30zM1313 495h5v5h-5zM303 500h15v5h-15zM333 500h135v5h-135zM518 500h60v5h-60zM628 500h80v5h-80zM738 500h80v5h-80zM848 500h10v5h-10zM988 500h5v5h-5zM1143 500h15v5h-15zM1313 500h5v5h-5zM118 505h15v5h-15zM158 505h105v5h-105zM268 505h590v5h-590zM868 505h30v5h-30zM908 505h40v5h-40zM958 505h360v5h-360zM128 520h5v5h-5zM143 520h5v5h-5zM158 520h5v5h-5zM248 520h5v5h-5zM258 520h5v5h-5zM268 520h5v5h-5zM298 520h5v5h-5zM513 520h5v5h-5zM623 520h5v5h-5zM903 520h5v5h-5zM1093 520h10v5h-10zM1083 525h5v5h-5zM208 530h5v5h-5zM243 530h10v5h-10zM258 530h5v5h-5zM268 530h5v5h-5zM278 530h5v5h-5zM323 530h5v5h-5zM483 530h5v5h-5zM498 530h5v5h-5zM593 530h5v5h-5zM608 530h5v5h-5zM903 530h5v5h-5zM968 530h5v5h-5zM1163 530h5v5h-5zM118 540h1200v5h-1200zM118 545h820v5h-820zM948 545h10v5h-10zM968 545h350v5h-350zM293 550h25v5h-25zM333 550h130v5h-130zM518 550h55v5h-55zM628 550h80v5h-80zM738 550h80v5h-80zM848 550h10v5h-10zM1128 550h30v5h-30zM1313 550h5v5h-5zM303 555h15v5h-15zM333 555h130v5h-130zM518 555h55v5h-55zM628 555h80v5h-80zM738 555h80v5h-80zM848 555h10v5h-10zM988 555h5v5h-5zM1143 555h15v5h-15zM1313 555h5v5h-5zM118 560h15v5h-15zM138 560h60v5h-60zM208 560h70v5h-70zM293 560h205v5h-205zM503 560h105v5h-105zM613 560h105v5h-105zM723 560h105v5h-105zM833 560h25v5h-25zM868 560h30v5h-30zM908 560h40v5h-40zM958 560h360v5h-360zM118 575h5v5h-5zM468 575h5v5h-5zM488 575h5v5h-5zM513 575h5v5h-5zM578 575h5v5h-5zM598 575h5v5h-5zM623 575h5v5h-5zM728 575h5v5h-5zM838 575h5v5h-5zM1018 575h5v5h-5zM1063 575h5v5h-5zM1178 575h10v5h-10zM1213 575h5v5h-5zM1258 575h5v5h-5zM1293 575h5v5h-5z"/><path fill="#ececec" d="M308 370h5v5h-5zM408 370h5v5h-5zM518 370h5v5h-5zM628 370h5v5h-5zM738 370h5v5h-5zM848 370h5v5h-5zM1148 370h5v5h-5zM1313 370h5v5h-5zM118 395h1200v5h-1200zM938 405h5v5h-5zM288 415h5v5h-5zM708 415h5v5h-5zM818 415h5v5h-5zM168 420h5v5h-5zM858 420h10v5h-10zM898 420h5v5h-5zM113 425h5v5h-5zM163 465h5v5h-5zM228 465h5v5h-5zM708 465h5v5h-5zM818 465h5v5h-5zM973 465h5v5h-5zM1108 465h5v5h-5zM173 475h5v5h-5zM153 520h5v5h-5zM163 520h5v5h-5zM203 520h5v5h-5zM278 520h5v5h-5zM338 520h5v5h-5zM873 520h10v5h-10zM893 520h10v5h-10zM968 520h5v5h-5zM988 520h5v5h-5zM1008 520h5v5h-5zM1088 520h5v5h-5zM1178 520h5v5h-5zM243 525h5v5h-5zM983 525h5v5h-5zM138 530h5v5h-5zM163 530h10v5h-10zM203 530h5v5h-5zM288 530h5v5h-5zM328 530h5v5h-5zM513 530h5v5h-5zM623 530h5v5h-5zM713 530h15v5h-15zM823 530h15v5h-15zM883 530h5v5h-5zM893 530h5v5h-5zM963 530h5v5h-5zM1033 530h5v5h-5zM1048 530h10v5h-10zM1068 530h5v5h-5zM1078 530h5v5h-5zM1088 530h5v5h-5zM1118 530h5v5h-5zM1133 530h5v5h-5zM1168 530h5v5h-5zM123 575h5v5h-5zM963 575h5v5h-5zM998 575h5v5h-5zM1013 575h5v5h-5zM1098 575h5v5h-5zM1158 575h5v5h-5zM1288 575h5v5h-5zM923 580h5v5h-5zM1288 580h5v5h-5z"/><path fill="#f0f0f0" d="M963 405h5v5h-5zM293 415h10v5h-10zM1133 415h10v5h-10zM1308 415h5v5h-5zM173 420h5v5h-5zM228 420h5v5h-5zM118 425h1200v5h-1200zM293 470h5v5h-5zM1133 470h10v5h-10zM948 475h10v5h-10zM113 480h5v5h-5zM168 520h5v5h-5zM253 520h5v5h-5zM288 520h5v5h-5zM883 520h5v5h-5zM948 520h5v5h-5zM963 520h5v5h-5zM973 520h5v5h-5zM718 525h5v5h-5zM828 525h5v5h-5zM118 530h5v5h-5zM133 530h5v5h-5zM198 530h5v5h-5zM213 530h5v5h-5zM238 530h5v5h-5zM303 530h5v5h-5zM508 530h5v5h-5zM618 530h5v5h-5zM733 530h5v5h-5zM843 530h5v5h-5zM878 530h5v5h-5zM948 530h5v5h-5zM973 530h5v5h-5zM1108 530h5v5h-5zM1123 530h5v5h-5zM113 565h5v5h-5zM323 575h5v5h-5z"/><path fill="#f4f4f4" d="M1123 410h5v5h-5zM948 420h10v5h-10zM1073 465h5v5h-5zM1123 465h5v5h-5zM303 470h5v5h-5zM908 470h5v5h-5zM1008 470h5v5h-5zM498 475h5v5h-5zM608 475h5v5h-5zM718 475h5v5h-5zM828 475h5v5h-5zM118 480h1200v5h-1200zM113 510h5v5h-5zM148 520h5v5h-5zM218 520h10v5h-10zM293 520h5v5h-5zM708 520h5v5h-5zM818 520h5v5h-5zM978 520h5v5h-5zM178 525h5v5h-5zM908 525h5v5h-5zM123 530h5v5h-5zM218 530h10v5h-10zM263 530h5v5h-5zM273 530h5v5h-5zM293 530h5v5h-5zM503 530h5v5h-5zM613 530h5v5h-5zM873 530h5v5h-5zM938 530h5v5h-5zM953 530h5v5h-5zM978 530h10v5h-10zM993 530h20v5h-20zM1028 530h5v5h-5zM1093 530h5v5h-5zM1138 530h5v5h-5zM113 535h5v5h-5zM118 565h1200v5h-1200zM983 575h5v5h-5zM193 580h5v5h-5zM323 580h5v5h-5zM498 580h5v5h-5zM608 580h5v5h-5zM718 580h5v5h-5zM828 580h5v5h-5zM908 580h5v5h-5zM1008 580h5v5h-5zM1123 580h5v5h-5z"/><path fill="#f8f8f8" d="M113 400h5v5h-5zM113 405h5v5h-5zM113 410h5v5h-5zM718 410h5v5h-5zM828 410h5v5h-5zM918 410h5v5h-5zM1008 410h5v5h-5zM1088 410h5v5h-5zM113 415h5v5h-5zM908 415h5v5h-5zM1008 415h5v5h-5zM113 420h5v5h-5zM233 420h5v5h-5zM113 455h5v5h-5zM113 460h5v5h-5zM113 465h5v5h-5zM918 465h5v5h-5zM1088 465h5v5h-5zM113 470h5v5h-5zM923 470h5v5h-5zM113 475h5v5h-5zM118 510h1200v5h-1200zM113 515h5v5h-5zM113 520h5v5h-5zM273 520h5v5h-5zM1083 520h5v5h-5zM113 525h5v5h-5zM233 525h5v5h-5zM498 525h5v5h-5zM608 525h5v5h-5zM1133 525h10v5h-10zM113 530h5v5h-5zM178 530h15v5h-15zM233 530h5v5h-5zM728 530h5v5h-5zM838 530h5v5h-5zM933 530h5v5h-5zM1018 530h5v5h-5zM1043 530h5v5h-5zM1098 530h5v5h-5zM1128 530h5v5h-5zM118 535h1200v5h-1200zM113 570h5v5h-5zM113 575h5v5h-5zM338 575h5v5h-5zM708 575h5v5h-5zM818 575h5v5h-5zM1003 575h5v5h-5zM1108 575h5v5h-5zM113 580h5v5h-5zM988 580h5v5h-5zM1088 580h5v5h-5z"/><path fill="#fcfcfc" d="M308 400h5v5h-5zM408 400h5v5h-5zM518 400h5v5h-5zM628 400h5v5h-5zM738 400h5v5h-5zM848 400h5v5h-5zM1148 400h5v5h-5zM1313 400h5v5h-5zM308 405h5v5h-5zM408 405h5v5h-5zM518 405h5v5h-5zM628 405h5v5h-5zM738 405h5v5h-5zM848 405h5v5h-5zM943 405h5v5h-5zM958 405h5v5h-5zM1148 405h5v5h-5zM1313 405h5v5h-5zM288 410h5v5h-5zM308 410h5v5h-5zM408 410h5v5h-5zM498 410h5v5h-5zM518 410h5v5h-5zM608 410h5v5h-5zM628 410h5v5h-5zM738 410h5v5h-5zM848 410h5v5h-5zM908 410h5v5h-5zM1148 410h5v5h-5zM1313 410h5v5h-5zM208 415h5v5h-5zM308 415h5v5h-5zM408 415h5v5h-5zM518 415h5v5h-5zM628 415h5v5h-5zM738 415h5v5h-5zM848 415h5v5h-5zM918 415h10v5h-10zM1148 415h5v5h-5zM1313 415h5v5h-5zM308 420h5v5h-5zM408 420h5v5h-5zM498 420h5v5h-5zM518 420h5v5h-5zM608 420h5v5h-5zM628 420h5v5h-5zM718 420h5v5h-5zM738 420h5v5h-5zM828 420h5v5h-5zM848 420h5v5h-5zM903 420h5v5h-5zM1148 420h5v5h-5zM1313 420h5v5h-5zM308 455h5v5h-5zM408 455h5v5h-5zM518 455h5v5h-5zM628 455h5v5h-5zM738 455h5v5h-5zM848 455h5v5h-5zM1148 455h5v5h-5zM1313 455h5v5h-5zM308 460h5v5h-5zM408 460h5v5h-5zM518 460h5v5h-5zM628 460h5v5h-5zM738 460h5v5h-5zM848 460h5v5h-5zM1148 460h5v5h-5zM1313 460h5v5h-5zM308 465h5v5h-5zM408 465h5v5h-5zM498 465h5v5h-5zM518 465h5v5h-5zM608 465h5v5h-5zM628 465h5v5h-5zM718 465h5v5h-5zM738 465h5v5h-5zM828 465h5v5h-5zM848 465h5v5h-5zM1008 465h5v5h-5zM1148 465h5v5h-5zM1313 465h5v5h-5zM208 470h5v5h-5zM308 470h5v5h-5zM408 470h5v5h-5zM518 470h5v5h-5zM628 470h5v5h-5zM738 470h5v5h-5zM848 470h5v5h-5zM918 470h5v5h-5zM1148 470h5v5h-5zM1313 470h5v5h-5zM308 475h5v5h-5zM408 475h5v5h-5zM518 475h5v5h-5zM628 475h5v5h-5zM738 475h5v5h-5zM848 475h5v5h-5zM903 475h5v5h-5zM1148 475h5v5h-5zM1313 475h5v5h-5zM308 515h5v5h-5zM408 515h5v5h-5zM518 515h5v5h-5zM628 515h5v5h-5zM738 515h5v5h-5zM848 515h5v5h-5zM1148 515h5v5h-5zM1313 515h5v5h-5zM303 520h10v5h-10zM408 520h5v5h-5zM473 520h5v5h-5zM518 520h5v5h-5zM583 520h5v5h-5zM628 520h5v5h-5zM718 520h5v5h-5zM738 520h5v5h-5zM828 520h5v5h-5zM848 520h5v5h-5zM918 520h5v5h-5zM1023 520h5v5h-5zM1148 520h5v5h-5zM1313 520h5v5h-5zM308 525h5v5h-5zM408 525h5v5h-5zM473 525h5v5h-5zM518 525h5v5h-5zM583 525h5v5h-5zM628 525h5v5h-5zM738 525h5v5h-5zM848 525h5v5h-5zM918 525h10v5h-10zM1118 525h5v5h-5zM1148 525h5v5h-5zM1313 525h5v5h-5zM308 530h5v5h-5zM338 530h5v5h-5zM408 530h5v5h-5zM518 530h5v5h-5zM628 530h5v5h-5zM738 530h5v5h-5zM848 530h5v5h-5zM1038 530h5v5h-5zM1103 530h5v5h-5zM1148 530h5v5h-5zM1178 530h5v5h-5zM1313 530h5v5h-5zM308 570h5v5h-5zM408 570h5v5h-5zM518 570h5v5h-5zM628 570h5v5h-5zM738 570h5v5h-5zM848 570h5v5h-5zM1148 570h5v5h-5zM1313 570h5v5h-5zM308 575h5v5h-5zM408 575h5v5h-5zM498 575h5v5h-5zM518 575h5v5h-5zM608 575h5v5h-5zM628 575h5v5h-5zM738 575h5v5h-5zM848 575h5v5h-5zM918 575h5v5h-5zM943 575h5v5h-5zM1123 575h5v5h-5zM1148 575h5v5h-5zM1313 575h5v5h-5zM183 580h5v5h-5zM308 580h5v5h-5zM408 580h5v5h-5zM518 580h5v5h-5zM628 580h5v5h-5zM738 580h5v5h-5zM848 580h5v5h-5zM918 580h5v5h-5zM1148 580h5v5h-5zM1313 580h5v5h-5z"/><path fill="#ffffff" d="M118 400h190v5h-190zM313 400h95v5h-95zM413 400h105v5h-105zM523 400h105v5h-105zM633 400h105v5h-105zM743 400h105v5h-105zM853 400h295v5h-295zM1153 400h160v5h-160zM118 405h190v5h-190zM313 405h95v5h-95zM413 405h105v5h-105zM523 405h105v5h-105zM633 405h105v5h-105zM743 405h105v5h-105zM853 405h85v5h-85zM948 405h10v5h-10zM968 405h180v5h-180zM1153 405h160v5h-160zM208 410h5v5h-5zM253 410h5v5h-5zM293 410h15v5h-15zM313 410h5v5h-5zM343 410h65v5h-65zM413 410h55v5h-55zM523 410h55v5h-55zM633 410h75v5h-75zM743 410h75v5h-75zM853 410h5v5h-5zM1128 410h20v5h-20zM1153 410h5v5h-5zM253 415h5v5h-5zM303 415h5v5h-5zM313 415h5v5h-5zM338 415h70v5h-70zM413 415h55v5h-55zM523 415h55v5h-55zM633 415h75v5h-75zM743 415h75v5h-75zM853 415h5v5h-5zM988 415h5v5h-5zM1088 415h5v5h-5zM1143 415h5v5h-5zM1153 415h5v5h-5zM118 420h50v5h-50zM183 420h45v5h-45zM238 420h70v5h-70zM313 420h95v5h-95zM413 420h85v5h-85zM503 420h15v5h-15zM523 420h85v5h-85zM613 420h15v5h-15zM633 420h85v5h-85zM723 420h15v5h-15zM743 420h85v5h-85zM833 420h15v5h-15zM853 420h5v5h-5zM868 420h30v5h-30zM908 420h40v5h-40zM958 420h190v5h-190zM1153 420h160v5h-160zM118 455h190v5h-190zM313 455h95v5h-95zM413 455h105v5h-105zM523 455h105v5h-105zM633 455h105v5h-105zM743 455h105v5h-105zM853 455h295v5h-295zM1153 455h160v5h-160zM118 460h190v5h-190zM313 460h95v5h-95zM413 460h105v5h-105zM523 460h105v5h-105zM633 460h105v5h-105zM743 460h105v5h-105zM853 460h295v5h-295zM1153 460h160v5h-160zM208 465h5v5h-5zM293 465h15v5h-15zM313 465h5v5h-5zM343 465h65v5h-65zM413 465h55v5h-55zM523 465h55v5h-55zM633 465h75v5h-75zM743 465h75v5h-75zM853 465h5v5h-5zM908 465h5v5h-5zM1128 465h20v5h-20zM1153 465h5v5h-5zM313 470h5v5h-5zM343 470h65v5h-65zM413 470h55v5h-55zM523 470h55v5h-55zM633 470h75v5h-75zM743 470h75v5h-75zM853 470h5v5h-5zM988 470h5v5h-5zM1088 470h5v5h-5zM1143 470h5v5h-5zM1153 470h5v5h-5zM118 475h50v5h-50zM183 475h125v5h-125zM313 475h95v5h-95zM413 475h85v5h-85zM503 475h15v5h-15zM523 475h85v5h-85zM613 475h15v5h-15zM633 475h85v5h-85zM723 475h15v5h-15zM743 475h85v5h-85zM833 475h15v5h-15zM853 475h5v5h-5zM868 475h30v5h-30zM908 475h40v5h-40zM958 475h190v5h-190zM1153 475h160v5h-160zM118 515h190v5h-190zM313 515h95v5h-95zM413 515h105v5h-105zM523 515h105v5h-105zM633 515h105v5h-105zM743 515h105v5h-105zM853 515h295v5h-295zM1153 515h160v5h-160zM178 520h5v5h-5zM208 520h5v5h-5zM233 520h5v5h-5zM313 520h5v5h-5zM343 520h65v5h-65zM413 520h60v5h-60zM498 520h5v5h-5zM523 520h60v5h-60zM608 520h5v5h-5zM633 520h75v5h-75zM743 520h75v5h-75zM853 520h5v5h-5zM908 520h5v5h-5zM1118 520h5v5h-5zM1133 520h15v5h-15zM1153 520h5v5h-5zM1183 520h130v5h-130zM313 525h5v5h-5zM343 525h65v5h-65zM413 525h60v5h-60zM523 525h60v5h-60zM633 525h75v5h-75zM743 525h75v5h-75zM853 525h5v5h-5zM988 525h5v5h-5zM1143 525h5v5h-5zM1153 525h5v5h-5zM1183 525h130v5h-130zM313 530h5v5h-5zM343 530h65v5h-65zM413 530h65v5h-65zM523 530h65v5h-65zM633 530h80v5h-80zM743 530h80v5h-80zM853 530h5v5h-5zM908 530h5v5h-5zM918 530h10v5h-10zM988 530h5v5h-5zM1023 530h5v5h-5zM1083 530h5v5h-5zM1143 530h5v5h-5zM1153 530h5v5h-5zM1183 530h130v5h-130zM118 570h190v5h-190zM313 570h95v5h-95zM413 570h105v5h-105zM523 570h105v5h-105zM633 570h105v5h-105zM743 570h105v5h-105zM853 570h295v5h-295zM1153 570h160v5h-160zM128 575h60v5h-60zM198 575h55v5h-55zM263 575h45v5h-45zM313 575h5v5h-5zM343 575h65v5h-65zM413 575h55v5h-55zM523 575h55v5h-55zM633 575h75v5h-75zM718 575h5v5h-5zM743 575h75v5h-75zM828 575h5v5h-5zM853 575h5v5h-5zM868 575h50v5h-50zM948 575h10v5h-10zM968 575h15v5h-15zM1008 575h5v5h-5zM1073 575h20v5h-20zM1128 575h20v5h-20zM1153 575h5v5h-5zM248 580h5v5h-5zM293 580h15v5h-15zM313 580h5v5h-5zM343 580h65v5h-65zM413 580h55v5h-55zM523 580h55v5h-55zM633 580h75v5h-75zM743 580h75v5h-75zM853 580h5v5h-5zM1128 580h20v5h-20zM1153 580h5v5h-5z"/></svg>
<div style="position:absolute;left:1318px;top:370px;width:1px;height:215px;background:#e3e4ec"></div>
<div class="t" style="left:7.50px;top:11.80px;font-size:13px;color:#33363f;letter-spacing:0.221px">Выплата по сотрудникам № 26-ав от 25.08.2020</div>
<div class="t" style="left:353.30px;top:11.80px;font-size:13px;color:#33363f;letter-spacing:0.193px">Выплаты по сотрудникам - Реестр от 01.01.2020 - 31.12.2020</div>
<div class="t" style="left:22.60px;top:66.67px;font-size:11.5px;color:#1f8048;-webkit-text-stroke:0.2px #1f8048;letter-spacing:0.342px">Вложения</div>
<div class="t" style="left:99.10px;top:66.67px;font-size:11.5px;color:#1f8048;-webkit-text-stroke:0.2px #1f8048;letter-spacing:0.289px">Сохранить</div>
<div class="t" style="left:178.60px;top:66.67px;font-size:11.5px;color:#1f8048;-webkit-text-stroke:0.2px #1f8048;letter-spacing:0.389px">Сохранить и закрыть</div>
<div class="t" style="left:318.00px;top:66.67px;font-size:11.5px;color:#1f8048;-webkit-text-stroke:0.2px #1f8048;letter-spacing:0.500px">Закрыть</div>
<div class="t" style="left:385.40px;top:66.67px;font-size:11.5px;color:#1f8048;-webkit-text-stroke:0.2px #1f8048;letter-spacing:0.360px">Печать</div>
<div class="t" style="left:445.70px;top:66.67px;font-size:11.5px;color:#1f8048;-webkit-text-stroke:0.2px #1f8048;letter-spacing:0.361px">Выгрузить</div>
<div class="t" style="left:525.20px;top:66.67px;font-size:11.5px;color:#1f8048;-webkit-text-stroke:0.2px #1f8048;letter-spacing:0.235px">Расчеты по НДФЛ</div>
<div class="t" style="left:1788.80px;top:66.67px;font-size:11.5px;color:#1f8048;-webkit-text-stroke:0.2px #1f8048;letter-spacing:0.400px">Обновить</div>
<div class="t" style="left:6.60px;top:97.34px;font-size:12px;color:#3a3d4a;-webkit-text-stroke:0.2px #3a3d4a;letter-spacing:-0.053px">Выплата: №/Дата*</div>
<div class="t" style="left:474.50px;top:97.34px;font-size:12px;color:#3a3d4a;-webkit-text-stroke:0.2px #3a3d4a">Дата выплаты</div>
<div class="t" style="left:785.60px;top:97.34px;font-size:12px;color:#3a3d4a;-webkit-text-stroke:0.2px #3a3d4a;letter-spacing:0.108px">Период выплаты</div>
<div class="t" style="left:1097.00px;top:97.34px;font-size:12px;color:#3a3d4a;-webkit-text-stroke:0.2px #3a3d4a;letter-spacing:0.389px">Примечание</div>
<div class="t" style="left:7.60px;top:131.14px;font-size:12px;color:#3a3d4a;-webkit-text-stroke:0.2px #3a3d4a;letter-spacing:-0.050px">Статус документа*</div>
<div class="t" style="left:474.50px;top:131.14px;font-size:12px;color:#3a3d4a;-webkit-text-stroke:0.2px #3a3d4a;letter-spacing:0.106px">Операция выплаты</div>
<div class="t" style="left:1097.00px;top:131.14px;font-size:12px;color:#3a3d4a;-webkit-text-stroke:0.2px #3a3d4a;letter-spacing:0.127px">Комп.за задержку</div>
<div class="t" style="left:1409.00px;top:131.14px;font-size:12px;color:#3a3d4a;-webkit-text-stroke:0.2px #3a3d4a;letter-spacing:0.180px">Исполнитель</div>
<div class="t" style="left:6.60px;top:164.94px;font-size:12px;color:#3a3d4a;-webkit-text-stroke:0.2px #3a3d4a;letter-spacing:-0.080px">Вид расчета</div>
<div class="t" style="left:474.50px;top:164.94px;font-size:12px;color:#3a3d4a;-webkit-text-stroke:0.2px #3a3d4a;letter-spacing:0.053px">- по подразделению</div>
<div class="t" style="left:786.60px;top:164.94px;font-size:12px;color:#3a3d4a;-webkit-text-stroke:0.2px #3a3d4a;letter-spacing:0.161px">- по организации</div>
<div class="t" style="left:1098.00px;top:164.94px;font-size:12px;color:#3a3d4a;-webkit-text-stroke:0.2px #3a3d4a">Документ расчета</div>
<div class="t" style="left:6.60px;top:198.74px;font-size:12px;color:#3a3d4a;-webkit-text-stroke:0.2px #3a3d4a;letter-spacing:0.066px">Расчет &quot;выплачено&quot; от &quot;выплатить&quot;: %</div>
<div class="t" style="left:474.50px;top:198.74px;font-size:12px;color:#3a3d4a;-webkit-text-stroke:0.2px #3a3d4a;letter-spacing:0.278px">округление</div>
<div class="t" style="left:785.60px;top:198.74px;font-size:12px;color:#3a3d4a;-webkit-text-stroke:0.2px #3a3d4a;letter-spacing:0.093px">Всего: выплатить</div>
<div class="t" style="left:1098.00px;top:198.74px;font-size:12px;color:#3a3d4a;-webkit-text-stroke:0.2px #3a3d4a;letter-spacing:0.200px">выплачено</div>
<div class="t" style="left:1410.00px;top:198.74px;font-size:12px;color:#3a3d4a;-webkit-text-stroke:0.2px #3a3d4a;letter-spacing:0.027px">не выплачено</div>
<div class="t" style="left:165.00px;top:97.90px;font-size:13px;color:#858585;letter-spacing:0.225px">26-ав</div>
<div class="t" style="left:320.10px;top:98.00px;font-size:13px;color:#858585;letter-spacing:-0.012px">25.08.2020</div>
<div class="t" style="left:631.60px;top:98.00px;font-size:13px;color:#858585;letter-spacing:0.090px">25.08.2020</div>
<div class="t" style="left:944.60px;top:97.90px;font-size:13px;color:#505050;letter-spacing:0.045px">2020-08 Август</div>
<div class="t" style="left:1256.40px;top:97.90px;font-size:13px;color:#858585;letter-spacing:0.261px">Аванс за период &quot;Август 2020 г.&quot;</div>
<div class="t" style="left:163.60px;top:131.70px;font-size:13px;color:#141414;letter-spacing:0.600px">Выплачен</div>
<div class="t" style="left:631.60px;top:131.70px;font-size:13px;color:#858585;letter-spacing:-0.200px">403</div>
<div class="t" style="left:681.00px;top:132.10px;font-size:13px;color:#858585;letter-spacing:0.354px">Перечислен аванс</div>
<div class="t" style="left:165.00px;top:165.90px;font-size:13px;color:#858585;letter-spacing:0.100px">Аванс</div>
<div class="t" style="left:1255.40px;top:165.90px;font-size:13px;color:#444;letter-spacing:0.229px">Расчет заработной платы № 26-ав от 25 Августа 2020г. за августа 2020г.</div>
<div class="t" style="left:631.60px;top:199.90px;font-size:13px;color:#858585;letter-spacing:0.493px">без округления</div>
<div class="t" style="left:1567.40px;top:200.10px;font-size:13px;color:#333">0</div>
<div class="t" style="left:23.90px;top:256.64px;font-size:12px;color:#6f727b;letter-spacing:0.101px">Добавить</div>
<div class="t" style="left:97.90px;top:256.64px;font-size:12px;color:#6f727b;letter-spacing:0.051px">Удалить</div>
<div class="t" style="left:1453.20px;top:243.30px;font-size:13px;color:#3f424c;letter-spacing:0.051px">строки:</div>
<div class="t" style="left:1499.50px;top:244.14px;font-size:12px;color:#3f424c;font-weight:700">77</div>
<div class="t" style="left:1522.40px;top:243.30px;font-size:13px;color:#3f424c;letter-spacing:-0.236px">выделено:</div>
<div class="t" style="left:1587.60px;top:243.72px;font-size:12.5px;color:#3f424c;font-weight:700">0</div>
<div class="t" style="left:1603.70px;top:243.30px;font-size:13px;color:#3f424c;letter-spacing:-0.234px">в фильтре:</div>
<div class="t" style="left:1670.00px;top:243.72px;font-size:12.5px;color:#3f424c;font-weight:700">0</div>
<div class="t" style="left:1697.00px;top:257.77px;font-size:11.5px;color:#1f8048;-webkit-text-stroke:0.1px #1f8048;letter-spacing:0.333px">экспорт</div>
<div class="t" style="left:1761.00px;top:257.77px;font-size:11.5px;color:#3b3e48;-webkit-text-stroke:0.1px #3b3e48;letter-spacing:0.280px">фильтр</div>
<div class="t" style="left:232.30px;top:282.82px;font-size:12.5px;color:#575b68;-webkit-text-stroke:0.3px #575b68;letter-spacing:0.438px">Сотрудник</div>
<div class="t" style="left:561.50px;top:282.82px;font-size:12.5px;color:#575b68;-webkit-text-stroke:0.3px #575b68;letter-spacing:0.200px">Аванс</div>
<div class="t" style="left:81.50px;top:320.42px;font-size:12.5px;color:#575b68;-webkit-text-stroke:0.3px #575b68;letter-spacing:0.450px">Код</div>
<div class="t" style="left:147.60px;top:320.42px;font-size:12.5px;color:#575b68;-webkit-text-stroke:0.3px #575b68;letter-spacing:0.424px">наименование (ФИО)</div>
<div class="t" style="left:345.30px;top:320.42px;font-size:12.5px;color:#575b68;-webkit-text-stroke:0.3px #575b68;letter-spacing:-0.250px">таб.№</div>
<div class="t" style="left:435.30px;top:320.42px;font-size:12.5px;color:#575b68;-webkit-text-stroke:0.3px #575b68;letter-spacing:0.475px">выплатить</div>
<div class="t" style="left:544.20px;top:320.42px;font-size:12.5px;color:#575b68;-webkit-text-stroke:0.3px #575b68;letter-spacing:0.550px">выплачено</div>
<div class="t" style="left:645.20px;top:320.42px;font-size:12.5px;color:#575b68;-webkit-text-stroke:0.3px #575b68;letter-spacing:0.400px">не выплачено</div>
<div class="t" style="left:768.00px;top:320.42px;font-size:12.5px;color:#575b68;-webkit-text-stroke:0.3px #575b68;letter-spacing:0.485px">Взыскано</div>
<div class="t" style="left:942.40px;top:320.42px;font-size:12.5px;color:#575b68;-webkit-text-stroke:0.3px #575b68;letter-spacing:0.406px">Зарплатный проект</div>
<div class="t" style="left:1166.30px;top:320.42px;font-size:12.5px;color:#575b68;-webkit-text-stroke:0.3px #575b68;letter-spacing:0.364px">Номер лицевого счета</div>
<div style="position:absolute;left:38px;top:0;width:19.299999999999997px;height:654px;overflow:hidden"><div class="t" style="left:8.10px;top:304.12px;font-size:12.5px;color:#575b68;-webkit-text-stroke:0.3px #575b68">№</div></div>
<div style="position:absolute;left:38px;top:0;width:19.299999999999997px;height:654px;overflow:hidden"><div class="t" style="left:5.30px;top:319.42px;font-size:12.5px;color:#575b68;-webkit-text-stroke:0.3px #575b68">п/п</div></div>
<div class="t" style="left:47.10px;top:348.42px;font-size:12.5px;color:#b3b7ca;font-style:italic;letter-spacing:-0.500px">Ф..</div>
<div class="t" style="left:86.90px;top:348.42px;font-size:12.5px;color:#b3b7ca;font-style:italic;letter-spacing:-0.500px">Ф..</div>
<div class="t" style="left:126.90px;top:348.42px;font-size:12.5px;color:#b3b7ca;font-style:italic;letter-spacing:0.250px">Фильтр по колонке</div>
<div class="t" style="left:326.80px;top:348.42px;font-size:12.5px;color:#b3b7ca;font-style:italic;letter-spacing:0.220px">Фильтр п...</div>
<div class="t" style="left:426.40px;top:348.42px;font-size:12.5px;color:#b3b7ca;font-style:italic;letter-spacing:0.200px">Фильтр по ...</div>
<div class="t" style="left:536.40px;top:348.42px;font-size:12.5px;color:#b3b7ca;font-style:italic;letter-spacing:0.200px">Фильтр по ...</div>
<div class="t" style="left:646.40px;top:348.42px;font-size:12.5px;color:#b3b7ca;font-style:italic;letter-spacing:0.200px">Фильтр по ...</div>
<div class="t" style="left:756.40px;top:348.42px;font-size:12.5px;color:#b3b7ca;font-style:italic;letter-spacing:0.200px">Фильтр по ...</div>
<div class="t" style="left:866.20px;top:348.42px;font-size:12.5px;color:#b3b7ca;font-style:italic;letter-spacing:0.250px">Фильтр по колонке</div>
<div class="t" style="left:1166.20px;top:348.42px;font-size:12.5px;color:#b3b7ca;font-style:italic;letter-spacing:0.250px">Фильтр по колонке</div>
<div class="t" style="left:41.10px;top:380.10px;font-size:13px;color:#333">1</div>
<div class="t" style="left:81.30px;top:380.10px;font-size:13px;color:#333">3...</div>
<div class="t" style="left:42.10px;top:408.10px;font-size:13px;color:#333">2</div>
<div class="t" style="left:81.30px;top:408.10px;font-size:13px;color:#333">3...</div>
<div class="t" style="left:42.10px;top:436.10px;font-size:13px;color:#333">3</div>
<div class="t" style="left:81.30px;top:436.10px;font-size:13px;color:#333">3...</div>
<div class="t" style="left:42.10px;top:464.10px;font-size:13px;color:#333">4</div>
<div class="t" style="left:81.30px;top:464.10px;font-size:13px;color:#333">3...</div>
<div class="t" style="left:42.10px;top:492.10px;font-size:13px;color:#333">5</div>
<div class="t" style="left:81.30px;top:492.10px;font-size:13px;color:#333">3...</div>
<div class="t" style="left:42.10px;top:520.10px;font-size:13px;color:#333">6</div>
<div class="t" style="left:81.30px;top:520.10px;font-size:13px;color:#333">3...</div>
<div class="t" style="left:42.10px;top:548.10px;font-size:13px;color:#333">7</div>
<div class="t" style="left:81.30px;top:548.10px;font-size:13px;color:#333">3...</div>
<div class="t" style="left:42.10px;top:576.10px;font-size:13px;color:#333">8</div>
<div class="t" style="left:81.30px;top:576.10px;font-size:13px;color:#333">3...</div>
<div style="position:absolute;left:4px;top:585px;width:1862px;height:67px;background:#f9f9f9;border-radius:0 0 4px 4px"></div>
<div style="position:absolute;left:4px;top:585px;width:1862px;height:1px;background:#e3e4ec"></div>
<div style="position:absolute;left:34px;top:586px;width:1px;height:66px;background:#e3e4ec"></div>
<div style="position:absolute;left:74px;top:586px;width:1px;height:66px;background:#e3e4ec"></div>
<div style="position:absolute;left:114px;top:586px;width:1px;height:66px;background:#e3e4ec"></div>
<div style="position:absolute;left:314px;top:586px;width:1px;height:66px;background:#e3e4ec"></div>
<div style="position:absolute;left:414px;top:586px;width:1px;height:66px;background:#e3e4ec"></div>
<div style="position:absolute;left:524px;top:586px;width:1px;height:66px;background:#e3e4ec"></div>
<div style="position:absolute;left:634px;top:586px;width:1px;height:66px;background:#e3e4ec"></div>
<div style="position:absolute;left:744px;top:586px;width:1px;height:66px;background:#e3e4ec"></div>
<div style="position:absolute;left:854px;top:586px;width:1px;height:66px;background:#e3e4ec"></div>
<div style="position:absolute;left:1154px;top:586px;width:1px;height:66px;background:#e3e4ec"></div>
<div style="position:absolute;left:1319px;top:586px;width:1px;height:66px;background:#e3e4ec"></div>
</body></html>
